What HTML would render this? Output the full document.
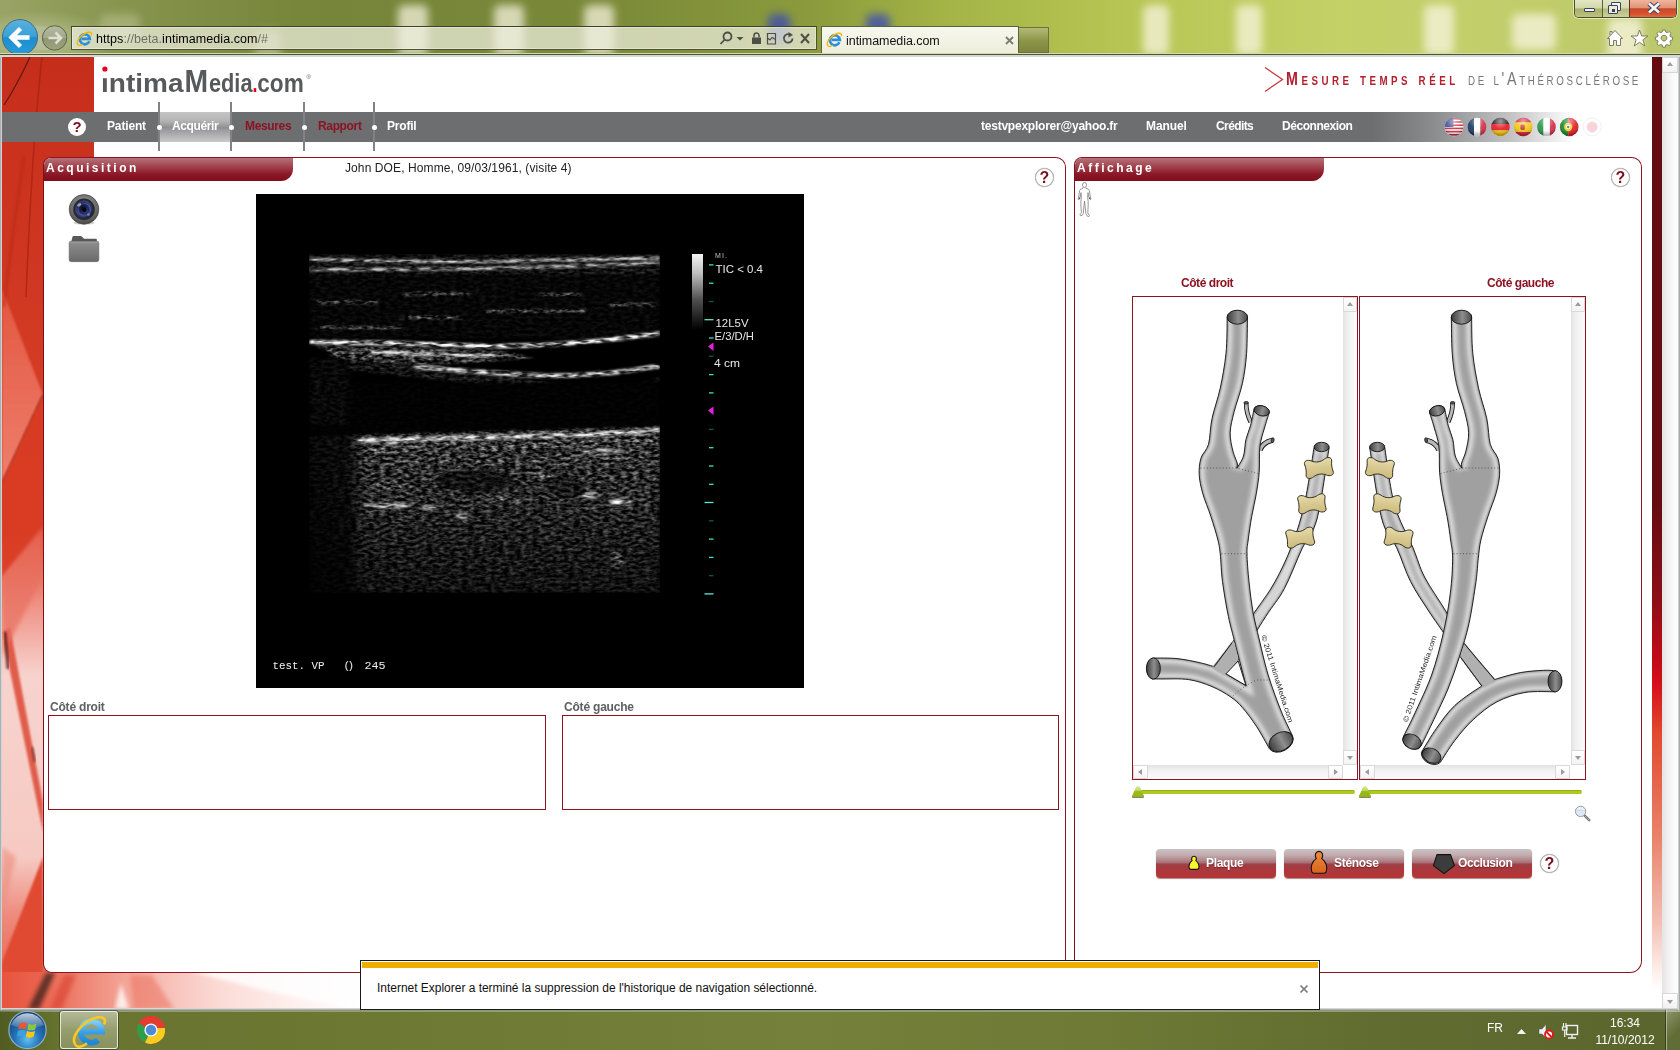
<!DOCTYPE html>
<html lang="fr">
<head>
<meta charset="utf-8">
<title>intimamedia.com</title>
<style>
*{box-sizing:border-box;margin:0;padding:0}
html,body{width:1680px;height:1050px;overflow:hidden;background:#fff}
body{position:relative;font-family:"Liberation Sans",sans-serif;font-size:12px;color:#222}
.abs{position:absolute}
/* ---------- browser chrome ---------- */
#chrome{position:absolute;left:0;top:0;width:1680px;height:57px;overflow:hidden;
 background:linear-gradient(90deg,#7c8a3a 0,#76853a 20%,#7a8838 35%,#8a9a3c 48%,#a3b346 56%,#b5c451 66%,#bccb55 80%,#b3c24d 92%,#a9b848 100%)}
#chrome .edge{z-index:2;position:absolute;left:0;top:53px;width:1680px;height:4px;background:linear-gradient(#d6d8b4 0,#d6d8b4 22%,#4f5629 28%,#4f5629 48%,#cfd6d6 54%,#d6dcdc 100%)}
#chrome .glow{position:absolute;left:-40px;top:10px;width:160px;height:60px;background:radial-gradient(ellipse at center,rgba(255,255,240,.38),rgba(255,255,240,0) 70%)}
#chrome .glass{position:absolute;left:0;top:0;width:1680px;height:57px;background:linear-gradient(90deg,rgba(255,255,255,.22) 0,rgba(255,255,255,.1) 120px,rgba(255,255,255,0) 300px,rgba(255,255,255,0) 1100px,rgba(255,255,240,.14) 1400px,rgba(255,255,240,.22) 1680px)}
.fb{position:absolute;top:5px;height:50px;background:#faf7e4;filter:blur(4px);opacity:.72;border-radius:6px}
.fb.bl{background:#3a48b8;opacity:.75;top:14px;height:30px}
.addr{position:absolute;left:71px;top:26px;width:746px;height:24px;border:1px solid #4d5232;border-top-color:#3e4228;background:rgba(236,238,220,.74);box-shadow:inset 0 0 0 1px rgba(255,255,255,.35)}
.url{position:absolute;left:24px;top:1px;line-height:22px;font-size:12.5px;color:#000;letter-spacing:.06px;white-space:nowrap}
.url em{font-style:normal;color:#6c6f66}
.tab{position:absolute;left:821px;top:26px;width:198px;height:28px;border:1px solid #5a5f3c;border-bottom:none;background:linear-gradient(#f7f8ee,#f1f2e3 60%,#ecedd9)}
.tt{position:absolute;left:24px;top:0;line-height:28px;font-size:12.5px;color:#111;white-space:nowrap;letter-spacing:-.05px}
.newtab{position:absolute;left:1019px;top:27px;width:30px;height:26px;border:1px solid #6a7040;border-left:none;background:linear-gradient(180deg,#b3ba78,#8c9448 55%,#7f873f)}
.wb{position:absolute;left:1574px;top:0;width:103px;height:18px;border:1px solid #4c5230;border-top:none;border-radius:0 0 5px 5px;overflow:hidden;box-shadow:0 0 0 1px rgba(255,255,255,.5)}
.wb>div{position:absolute;top:0;height:17px}
.wmin{left:0;width:28px;background:linear-gradient(#e3e6c4 0,#d2d6a8 48%,#aab068 52%,#bcc27e 100%);border-right:1px solid #5a6038}
.wres{left:28px;width:27px;background:linear-gradient(#e3e6c4 0,#d6d9b4 48%,#b4b97c 52%,#ccd09c 100%);border-right:1px solid #5a3028}
.wcl{left:55px;width:47px;background:linear-gradient(#f0b59c 0,#e09478 45%,#c8482a 52%,#d8502c 80%,#e06a40 100%)}
.wmin i,.wres i{position:absolute;background:#f4f4ec;border:1.5px solid #3a4160;border-radius:1px}
.wres b{position:absolute;left:8.5px;top:8.5px;width:3px;height:3px;background:#3a4160}
/* ---------- page ---------- */
#page{position:absolute;left:2px;top:57px;width:1650px;height:951px;background:#fff;overflow:hidden}
#redcol{position:absolute;left:0;top:0;width:400px;height:952px;overflow:hidden}
#navbar{position:absolute;left:0;top:55px;width:1660px;height:30px;
 background:linear-gradient(90deg,#6d6e70 0,#6d6e70 1370px,#8a8b8d 1430px,#c4c4c5 1510px,#fff 1572px)}
.nav{position:absolute;top:55px;height:30px;line-height:29px;font-weight:bold;font-size:12px;color:#fff;white-space:nowrap}
.nav.red{color:#8c1322}
.tag{font-size:19px;font-variant:small-caps;white-space:nowrap;transform:scaleX(.75);transform-origin:0 0;line-height:20px}
.sep{position:absolute;top:45px;width:2px;height:49px;background:#808285}
.dot{position:absolute;top:67.5px;width:5px;height:5px;margin-left:.5px;border-radius:50%;background:#fff}
.help{position:absolute;width:18px;height:18px;border-radius:50%;background:#fff;color:#7a0f1c;font-weight:bold;font-size:15px;line-height:18px;text-align:center}
.help.o{border:1px solid #b2b2b2;box-shadow:0 0 1px #999;width:19px;height:19px;line-height:18px;font-size:16px}
/* panels */
.panel{position:absolute;border:1px solid #8c1322;border-left:1.4px solid #7d0e1b;border-radius:8px 10px 12px 9px;background:#fff}
.ptitle{position:absolute;left:0;top:0;height:23px;color:#fff;font-weight:bold;font-size:12px;letter-spacing:2.5px;line-height:20px;padding-left:2px;
 background:linear-gradient(#b5737a 0,#a34550 35%,#8c1827 70%,#7f0d1b 100%);border-radius:7px 0 12px 0}
.box{position:absolute;border:1px solid #8c1322;background:#fff}
.lbl{position:absolute;font-weight:bold;font-size:12px;color:#5f6062;white-space:nowrap}
.lblr{position:absolute;font-weight:bold;font-size:12px;color:#8c1322;white-space:nowrap}
.sl{position:absolute;top:732.5px;height:4px;border-radius:2px;background:linear-gradient(#8aa417,#b3cf24 45%,#a6c41e)}
.slh{position:absolute;top:729px;width:12px;height:12px;filter:drop-shadow(0 1px 0 #808080)}
.slh:before{content:"";position:absolute;left:0;top:0;width:12px;height:11px;background:linear-gradient(#dbe9a8 0,#c0d85c 40%,#9cbd1c 48%,#93b512 100%);clip-path:polygon(36% 6%,50% 0,64% 6%,100% 92%,96% 100%,4% 100%,0 92%)}
.btn{position:absolute;top:792px;width:120px;height:29px;border-radius:4px;box-shadow:0 1px 1px rgba(90,40,40,.55);
 background:linear-gradient(#cbc2c4 0,#c2aeb1 20%,#b08388 40%,#a8696f 49%,#9d4249 51%,#a43b40 62%,#b73434 100%)}
.btn span{position:absolute;top:0;line-height:28px;font-weight:bold;font-size:12px;color:#fff;text-shadow:0 1px 1px rgba(60,0,0,.45);white-space:nowrap}
.vsb{position:absolute;right:0;top:0;width:14px;height:468px;background:linear-gradient(90deg,#e3e3e3,#f0f0f0 35%,#fbfbfb)}
.hsb{position:absolute;left:0;bottom:0;height:14px;width:210px;background:linear-gradient(#e3e3e3,#f0f0f0 35%,#fbfbfb)}
.sbb{position:absolute;width:14px;height:15px;background:linear-gradient(#fff,#f3f3f3);border:1px solid #d9d9d9;border-radius:1px}
.hsb .sbb{width:15px;height:14px}
.ar{position:absolute;left:50%;top:50%;width:0;height:0;border:3.5px solid transparent}
.ar.up{border-bottom:4px solid #9b9b9b;margin:-6px 0 0 -3.5px}.ar.dn{border-top:4px solid #9b9b9b;margin:-1.5px 0 0 -3.5px}
.ar.lf{border-right:4px solid #9b9b9b;margin:-3.5px 0 0 -6px}.ar.rt{border-left:4px solid #9b9b9b;margin:-3.5px 0 0 -1.5px}
/* taskbar */
#taskbar{position:absolute;left:0;top:1010px;width:1680px;height:40px;
 background:linear-gradient(90deg,#66722e 0,#6e7a33 25%,#75813a 48%,#6e7a35 65%,#616d30 82%,#59652c 100%)}
#taskbar .top{position:absolute;left:0;top:0;width:100%;height:2px;background:linear-gradient(#8a8f84,#9aa46a)}
#taskbar .dk{position:absolute;left:0;top:1px;width:60px;height:40px;background:linear-gradient(90deg,rgba(40,50,10,.35),rgba(40,50,10,0))}
.tbb{position:absolute;left:60px;top:2px;width:58px;height:38px;border:1px solid rgba(255,255,255,.75);border-radius:3px;background:linear-gradient(rgba(255,255,255,.5),rgba(255,255,255,.3) 50%,rgba(255,255,255,.22));box-shadow:0 0 0 1px rgba(40,45,20,.5)}
.tx{position:absolute;color:#fff;white-space:nowrap;line-height:14px}
.sd{position:absolute;left:1666px;top:1px;width:14px;height:40px;border-left:1px solid rgba(255,255,255,.45);background:linear-gradient(135deg,rgba(255,255,255,.3),rgba(255,255,255,.05) 60%);box-shadow:-1px 0 0 rgba(0,0,0,.35)}
#stripe{position:absolute;left:1652px;top:57px;width:10px;height:952px;background:linear-gradient(#650c10 0,#650c10 47%,#8c0f16 57%,#c00a18 63%,#d6101c 66%,#e2492e 71%,#e9836a 82%,#f3c1b4 91%,#fdf3f0 96.5%,#fff 98%)}
#vscroll{position:absolute;left:1662px;top:57px;width:16px;height:952px;background:linear-gradient(90deg,#e4e4e4,#efefef 30%,#fafafa 70%,#fdfdfd)}
.sbb2{position:absolute;left:0;width:16px;height:16px;background:linear-gradient(#fff,#f1f1f1);border:1px solid #d6d6d6}
#wbb{position:absolute;left:0;top:1008px;width:1680px;height:2px;background:linear-gradient(#e8eaec,#9a9e98)}
#wbl{position:absolute;left:0;top:54px;width:2px;height:956px;background:linear-gradient(90deg,#9aa0a0,#dfe3e6)}
#wbr{position:absolute;left:1678px;top:54px;width:2px;height:956px;background:linear-gradient(90deg,#e3e6e8,#8f9494)}
#notif{position:absolute;left:360px;top:960px;width:960px;height:50px;z-index:3;background:#fff;border:1px solid #1a1a1a;border-top-color:#1a1a1a}
#notif .or{position:absolute;left:1px;top:1px;right:1px;height:6px;background:#f1ac00}
#notif span{position:absolute;left:16px;top:20px;font-size:12px;line-height:14px;color:#111;white-space:nowrap;letter-spacing:-.02px}
/* scrollbar */
</style>
</head>
<body>
<div id="chrome">
 <div class="glass"></div><div class="glow"></div>
 <i class="fb" style="left:398px;width:30px"></i><i class="fb" style="left:494px;width:30px"></i><i class="fb" style="left:584px;width:30px"></i>
 <i class="fb" style="left:255px;width:26px;top:30px;opacity:.35"></i><i class="fb" style="left:100px;width:40px;top:14px;height:30px;opacity:.25"></i>
 <i class="fb bl" style="left:768px;width:22px"></i><i class="fb bl" style="left:866px;width:24px"></i>
 <i class="fb" style="left:1143px;width:26px"></i><i class="fb" style="left:1236px;width:26px"></i><i class="fb" style="left:1424px;width:30px"></i><i class="fb" style="left:1512px;width:44px;top:14px;height:36px"></i><i class="fb" style="left:1608px;width:34px;top:18px;opacity:.75"></i>
 <div class="edge"></div>
 <!-- nav buttons -->
 <svg class="abs" style="left:0;top:17px" width="72" height="37" viewBox="0 17 72 37">
  <defs><linearGradient id="bk" x1="0" y1="0" x2="0" y2="1"><stop offset="0" stop-color="#58b2de"/><stop offset=".5" stop-color="#3a9fd6"/><stop offset=".51" stop-color="#1c8ed0"/><stop offset="1" stop-color="#2a9ad8"/></linearGradient>
  <linearGradient id="fw" x1="0" y1="0" x2="0" y2="1"><stop offset="0" stop-color="#b4b9a0"/><stop offset=".5" stop-color="#a4aa8c"/><stop offset=".51" stop-color="#8f9670"/><stop offset="1" stop-color="#9ea483"/></linearGradient></defs>
  <path d="M30 24 Q44 28 52 26 L52 50 L30 50Z" fill="#b9bfa4" opacity=".6"/>
  <circle cx="54.6" cy="37.9" r="12.2" fill="url(#fw)" stroke="#5d6447" stroke-width="1"/>
  <path d="M48.5 38 H60 M55.5 32.5 L61 38 L55.5 43.5" fill="none" stroke="#dedfd2" stroke-width="2.6"/>
  <circle cx="20" cy="37.2" r="17.6" fill="url(#bk)" stroke="#4a6a78" stroke-width="1"/>
  <path d="M11.5 37.5 H29.5 M20.5 28.5 L11.5 37.5 L20.5 46.5" fill="none" stroke="#fff" stroke-width="4.4" stroke-linejoin="miter"/>
 </svg>
 <!-- address bar -->
 <div class="addr">
  <svg class="abs" style="left:4px;top:3px" width="17" height="17" viewBox="0 0 17 17"><path d="M13.4 11.3 A5 5 0 1 1 13.8 8.8 H5.6" fill="none" stroke="#2b8fdc" stroke-width="2.7"/><path d="M1.8 14.6 C-.5 11 6 3.6 12 2.3 C15 1.8 16.2 3 15.2 5.2" fill="none" stroke="#f5b400" stroke-width="1.4"/><path d="M1.8 14.6 C2.8 16 5 15.4 6.6 14.2" fill="none" stroke="#f5b400" stroke-width="1.3"/></svg>
  <span class="url">https<em>://beta.</em>intimamedia.com<em>/#</em></span>
  <svg class="abs" style="left:645px;top:3px" width="98" height="17" viewBox="0 0 98 17" fill="none" stroke="#4c4f46" stroke-width="1.8">
   <circle cx="10.5" cy="6.5" r="4"/><path d="M7.8 9.5 L3.5 14"/>
   <path d="M19.5 7 H26.5 L23 10.5Z" fill="#4c4f46" stroke="none"/>
   <rect x="35" y="7.5" width="9" height="6.5" fill="#4c4f46" stroke="none"/><path d="M37 7.5 V5.5 a2.5 2.5 0 0 1 5 0 V7.5" stroke-width="1.5"/>
   <path d="M50.5 3.5 H58.5 V14 H50.5Z M50.5 8 L53 10 L55 7.5 L58.5 9.5" stroke-width="1.2"/>
   <path d="M75.5 8.5 a4.3 4.3 0 1 1 -1.8 -3.6" stroke-width="1.8"/><path d="M71.5 2 L76 5 L71.5 7.5Z" fill="#4c4f46" stroke="none"/>
   <path d="M84 4 L92 13 M92 4 L84 13" stroke-width="2"/>
  </svg>
 </div>
 <!-- tab -->
 <div class="tab">
  <svg class="abs" style="left:4px;top:4px" width="17" height="17" viewBox="0 0 17 17"><path d="M13.4 11.3 A5 5 0 1 1 13.8 8.8 H5.6" fill="none" stroke="#2b8fdc" stroke-width="2.7"/><path d="M1.8 14.6 C-.5 11 6 3.6 12 2.3 C15 1.8 16.2 3 15.2 5.2" fill="none" stroke="#f5b400" stroke-width="1.4"/><path d="M1.8 14.6 C2.8 16 5 15.4 6.6 14.2" fill="none" stroke="#f5b400" stroke-width="1.3"/></svg>
  <span class="tt">intimamedia.com</span>
  <svg class="abs" style="left:183px;top:9px" width="9" height="9" viewBox="0 0 9 9"><path d="M1 1 L8 8 M8 1 L1 8" stroke="#7a7c70" stroke-width="1.8"/></svg>
 </div>
 <div class="newtab"></div>
 <!-- window buttons -->
 <div class="wb">
  <div class="wmin"><i style="left:9px;top:8px;width:11px;height:4px"></i></div>
  <div class="wres"><i style="left:8px;top:2px;width:10px;height:9px"></i><i style="left:5px;top:5px;width:10px;height:9px;background:#e9ead8"></i><b></b></div>
  <div class="wcl"><svg class="abs" style="left:17px;top:2px" width="14" height="12" viewBox="0 0 14 12"><path d="M2 1.5 L12 10.5 M12 1.5 L2 10.5" stroke="#3a4160" stroke-width="4.6"/><path d="M2 1.5 L12 10.5 M12 1.5 L2 10.5" stroke="#f4f4f4" stroke-width="2.8"/></svg></div>
 </div>
 <!-- home/star/gear -->
 <svg class="abs" style="left:1604px;top:27px" width="72" height="22" viewBox="0 0 72 22" fill="#fff" stroke="#6e7355" stroke-width=".9" stroke-linejoin="round">
  <path d="M3.5 11.5 L11 3.5 L18.5 11.5 H16.5 V18.5 H12.5 V13.5 H9.5 V18.5 H5.5 V11.5Z M6 8 V4.5 H8 V6.2"/>
  <path d="M35.5 3 L37.6 9 L44 9 L38.9 12.8 L40.8 19 L35.5 15.3 L30.2 19 L32.1 12.8 L27 9 L33.4 9Z"/>
  <path d="M58.7 3 h2.6 l.5 2.1 1.5 .6 1.9 -1.1 1.8 1.8 -1.1 1.9 .6 1.5 2.1 .5 v2.6 l-2.1 .5 -.6 1.5 1.1 1.9 -1.8 1.8 -1.9 -1.1 -1.5 .6 -.5 2.1 h-2.6 l-.5 -2.1 -1.5 -.6 -1.9 1.1 -1.8 -1.8 1.1 -1.9 -.6 -1.5 -2.1 -.5 v-2.6 l2.1 -.5 .6 -1.5 -1.1 -1.9 1.8 -1.8 1.9 1.1 1.5 -.6Z M60 8.2 a2.9 2.9 0 1 0 .01 0Z" fill-rule="evenodd"/>
 </svg>
</div>

<div id="page">
 <div id="redcol">
  <svg width="400" height="952" viewBox="0 0 400 952" style="position:absolute;left:0;top:0">
   <defs>
    <linearGradient id="rc1" x1="0" y1="0" x2="0" y2="1">
     <stop offset="0" stop-color="#c52e1b"/><stop offset=".3" stop-color="#d33a24"/><stop offset=".5" stop-color="#dc452e"/>
     <stop offset=".53" stop-color="#e6634e"/><stop offset=".58" stop-color="#f0968a"/><stop offset=".65" stop-color="#f7d3cd"/>
     <stop offset=".84" stop-color="#f6cac3"/><stop offset=".9" stop-color="#ee8c7e"/><stop offset="1" stop-color="#e55540"/>
    </linearGradient>
    <linearGradient id="rc2" x1="0" y1="0" x2="0" y2="1"><stop offset="0" stop-color="#e25740"/><stop offset="1" stop-color="#ee7f6c"/></linearGradient>
    <linearGradient id="rc3" x1="0" y1="0" x2="1" y2="0"><stop offset="0" stop-color="#e8543e"/><stop offset=".1" stop-color="#ea6450"/><stop offset=".25" stop-color="#f19484"/><stop offset=".4" stop-color="#f6bdb4"/><stop offset=".55" stop-color="#fbdcd7"/><stop offset=".75" stop-color="#fef2f0"/><stop offset=".9" stop-color="#fff"/></linearGradient>
    <filter id="b2"><feGaussianBlur stdDeviation="2"/></filter>
    <filter id="b1"><feGaussianBlur stdDeviation=".8"/></filter>
   </defs>
   <rect x="0" y="0" width="92" height="952" fill="url(#rc1)"/>
   <!-- light triangle mid -->
   <path d="M0 232 L41 338 L0 426 Z" fill="url(#rc2)" filter="url(#b1)"/>
   <path d="M41 338 L0 426" stroke="#5a1208" stroke-width="1.2" opacity=".7" filter="url(#b1)"/>
   <path d="M0 426 L41 338 L41 470 L0 520 Z" fill="#d93a24" opacity=".85" filter="url(#b1)"/>
   <!-- top thin lines -->
   <path d="M28 0 Q14 30 2 48" stroke="#4a120a" stroke-width="1.2" fill="none" opacity=".8"/>
   <path d="M40 0 Q30 90 24 240" stroke="#a8200f" stroke-width="1.5" fill="none" opacity=".7"/>
   <path d="M22 100 Q10 180 2 250" stroke="#b82814" stroke-width="3" fill="none" opacity=".5" filter="url(#b1)"/>
   <!-- pink zone streaks -->
   <path d="M0 575 L8 570 L41 745 L41 775 Z" fill="#dd4a36" opacity=".85" filter="url(#b1)"/>
   <path d="M0 520 L41 470 L41 520 L0 600 Z" fill="#e8705e" opacity=".7" filter="url(#b2)"/>
   <path d="M3 575 L6 612" stroke="#30100a" stroke-width="2.5" opacity=".8" filter="url(#b1)"/>
   <path d="M30 690 L33 705" stroke="#50140c" stroke-width="2" opacity=".7" filter="url(#b1)"/>
   <!-- lower red triangle -->
   <path d="M41 800 L41 915 L0 952 L0 905 Z" fill="#e04a32" filter="url(#b1)"/>
   <path d="M0 860 L14 800 L0 790 Z" fill="#ec8c7e" opacity=".6" filter="url(#b2)"/>
   <!-- bottom fan -->
   <rect x="0" y="915" width="400" height="37" fill="url(#rc3)"/>
   <path d="M44 916 L53 916 L37 952 L26 952 Z" fill="#2a1a18" opacity=".7" filter="url(#b2)"/>
   <path d="M62 918 L74 918 L60 952 L48 952 Z" fill="#d8402c" opacity=".6" filter="url(#b2)"/>
   <path d="M128 918 L150 918 L172 952 L132 952 Z" fill="#e9644f" opacity=".45" filter="url(#b2)"/>
   <path d="M113 952 L119 926 L127 952 Z" fill="#fff" opacity=".8" filter="url(#b2)"/>
   <path d="M185 913 L400 913 L400 952 L360 952 Q280 940 185 913Z" fill="#fff" opacity=".85" filter="url(#b2)"/>
  </svg>
 </div>
 <div id="navbar"></div>


 <!-- header: logo + tagline -->
 <svg class="abs" style="left:96px;top:4px" width="220" height="44" viewBox="0 0 220 44">
  <text y="30.6" font-family="Liberation Sans, sans-serif" font-weight="bold" font-size="25" fill="#58595b"><tspan x="3" textLength="82.5" lengthAdjust="spacingAndGlyphs">intima</tspan><tspan x="86.6" font-size="31.5" textLength="23.6" lengthAdjust="spacingAndGlyphs">M</tspan><tspan x="111" textLength="43.5" lengthAdjust="spacingAndGlyphs">edia</tspan><tspan x="154.6" fill="#e2001a" textLength="5" lengthAdjust="spacingAndGlyphs">.</tspan><tspan x="159.3" textLength="46.4" lengthAdjust="spacingAndGlyphs">com</tspan></text>
  <rect x="3" y="11" width="8" height="6.2" fill="#fff"/><circle cx="6.9" cy="8" r="2.6" fill="#e2001a"/>
  <text x="208.5" y="18" font-family="Liberation Sans, sans-serif" font-size="6" fill="#58595b">®</text>
 </svg>
 <svg class="abs" style="left:1260px;top:8px" width="24" height="28" viewBox="0 0 24 28"><path d="M3 2.5 L20.5 14.5 L3 26.5" fill="none" stroke="#c9363c" stroke-width="1.3"/></svg>
 <div class="abs tag" style="left:1284px;top:12px;color:#b3202c;font-weight:bold;letter-spacing:4.68px">Mesure temps réel</div>
 <div class="abs tag" style="left:1466px;top:12px;color:#77787b;letter-spacing:3.55px">de l'Athérosclérose</div>
 <!-- flags -->
 <svg class="abs" style="left:1440px;top:58px" width="166" height="24" viewBox="0 0 166 24">
  <defs>
   <radialGradient id="gl" cx=".5" cy=".2" r=".7"><stop offset="0" stop-color="#fff" stop-opacity=".55"/><stop offset=".6" stop-color="#fff" stop-opacity=".05"/><stop offset="1" stop-color="#000" stop-opacity=".25"/></radialGradient>
   <clipPath id="c1"><circle cx="12" cy="12" r="9.3"/></clipPath>
  </defs>
  <g clip-path="url(#c1)"><rect x="2" y="2" width="20" height="20" fill="#fff"/><g fill="#d22f45"><rect x="2" y="3" width="20" height="1.6"/><rect x="2" y="6.2" width="20" height="1.6"/><rect x="2" y="9.4" width="20" height="1.6"/><rect x="2" y="12.6" width="20" height="1.6"/><rect x="2" y="15.8" width="20" height="1.6"/><rect x="2" y="19" width="20" height="1.6"/></g><rect x="2" y="2" width="9.5" height="10" fill="#4a5a9c"/><circle cx="12" cy="12" r="9.3" fill="url(#gl)"/></g>
  <g transform="translate(23)" clip-path="url(#c1)"><rect x="2" y="2" width="7" height="20" fill="#1f3c68"/><rect x="9" y="2" width="6.4" height="20" fill="#fff"/><rect x="15.4" y="2" width="7" height="20" fill="#d5324b"/><circle cx="12" cy="12" r="9.3" fill="url(#gl)"/></g>
  <g transform="translate(46.4)" clip-path="url(#c1)"><rect x="2" y="2" width="20" height="7" fill="#2a2a2a"/><rect x="2" y="9" width="20" height="6.4" fill="#e8202a"/><rect x="2" y="15.4" width="20" height="7" fill="#f4c515"/><circle cx="12" cy="12" r="9.3" fill="url(#gl)"/></g>
  <g transform="translate(69.2)" clip-path="url(#c1)"><rect x="2" y="2" width="20" height="5.5" fill="#d42a3c"/><rect x="2" y="7.5" width="20" height="9.5" fill="#f6c81e"/><rect x="2" y="17" width="20" height="5.5" fill="#d42a3c"/><rect x="9.2" y="9.5" width="4.4" height="5.4" rx="1.5" fill="#c2412d"/><circle cx="12" cy="12" r="9.3" fill="url(#gl)"/></g>
  <g transform="translate(92.5)" clip-path="url(#c1)"><rect x="2" y="2" width="7" height="20" fill="#2e9a4e"/><rect x="9" y="2" width="6.4" height="20" fill="#fff"/><rect x="15.4" y="2" width="7" height="20" fill="#d5324b"/><circle cx="12" cy="12" r="9.3" fill="url(#gl)"/></g>
  <g transform="translate(115.2)" clip-path="url(#c1)"><rect x="2" y="2" width="9" height="20" fill="#1f8a3c"/><rect x="11" y="2" width="12" height="20" fill="#e0222e"/><circle cx="11" cy="12" r="4.2" fill="#f2d21c"/><circle cx="11" cy="12" r="2.2" fill="#fff"/><circle cx="11" cy="12" r="1.2" fill="#3a5fb0"/><circle cx="12" cy="12" r="9.3" fill="url(#gl)"/></g>
  <g transform="translate(138.2)"><circle cx="12" cy="12" r="9" fill="#fff" stroke="#f1f1f1" stroke-width="1"/><circle cx="12" cy="12" r="5.4" fill="#f8d3d9"/></g>
 </svg>
 <!-- nav items -->
 <div class="abs" style="left:157px;top:55px;width:72px;height:30px;background:linear-gradient(#c4c4c5 0,#b4b4b5 30%,#8f8f91 52%,#9c9c9e 60%,#c9c9ca 100%)"></div>
 <div class="sep" style="left:156px"></div><div class="sep" style="left:228px"></div><div class="sep" style="left:301px"></div><div class="sep" style="left:371px"></div>
 <div class="dot" style="left:154px"></div><div class="dot" style="left:226px"></div><div class="dot" style="left:299px"></div><div class="dot" style="left:369px"></div>
 <div class="help" style="left:66px;top:61px">?</div>
 <div class="nav" style="left:105px;letter-spacing:-.15px">Patient</div>
 <div class="nav" style="left:170px;letter-spacing:-.4px">Acquérir</div>
 <div class="nav red" style="left:243px;letter-spacing:-.35px">Mesures</div>
 <div class="nav red" style="left:316px;letter-spacing:-.35px">Rapport</div>
 <div class="nav" style="left:385px;letter-spacing:-.2px">Profil</div>
 <div class="nav" style="left:979px;letter-spacing:-.23px">testvpexplorer@yahoo.fr</div>
 <div class="nav" style="left:1144px;letter-spacing:-.1px">Manuel</div>
 <div class="nav" style="left:1214px;letter-spacing:-.6px">Crédits</div>
 <div class="nav" style="left:1280px;letter-spacing:-.45px">Déconnexion</div>
 <!-- panels -->
 <div class="panel" id="pAcq" style="left:41px;top:100px;width:1023px;height:816px">
  <div class="ptitle" style="width:249px">Acquisition</div>
 </div>
 <div class="panel" id="pAff" style="left:1072px;top:100px;width:568px;height:816px">
  <div class="ptitle" style="width:249px">Affichage</div>
 </div>
 <!-- camera & folder icons -->
 <svg class="abs" style="left:66px;top:136px" width="32" height="34" viewBox="0 0 32 34">
  <defs><radialGradient id="cam1" cx=".5" cy=".35" r=".7"><stop offset="0" stop-color="#9a9a9a"/><stop offset=".7" stop-color="#666"/><stop offset="1" stop-color="#3c3c3c"/></radialGradient>
  <radialGradient id="cam2" cx=".42" cy=".4" r=".65"><stop offset="0" stop-color="#0c0c16"/><stop offset=".3" stop-color="#1a2046"/><stop offset=".62" stop-color="#3b4588"/><stop offset=".85" stop-color="#283066"/><stop offset="1" stop-color="#12152c"/></radialGradient></defs>
  <ellipse cx="16" cy="30" rx="11" ry="1.6" fill="#000" opacity=".18"/>
  <circle cx="16" cy="16.4" r="14.8" fill="url(#cam1)" stroke="#4a4a4a" stroke-width=".8"/>
  <circle cx="16" cy="16.4" r="10.8" fill="#2a2a2a"/>
  <circle cx="16" cy="16.4" r="8.8" fill="url(#cam2)"/>
  <circle cx="16.4" cy="16.8" r="6.2" fill="none" stroke="#6a76c4" stroke-width=".9" opacity=".45"/><circle cx="16.4" cy="16.8" r="4.2" fill="none" stroke="#1a2050" stroke-width="1" opacity=".8"/>
  <circle cx="16.4" cy="16.8" r="2.1" fill="#05050a"/>
  <ellipse cx="11.2" cy="11.8" rx="2.2" ry="1.4" fill="#fff" opacity=".55" transform="rotate(-35 11.2 11.8)"/><circle cx="20.5" cy="21.5" r="1.3" fill="#aab4ff" opacity=".6"/>
 </svg>
 <svg class="abs" style="left:66px;top:178px" width="32" height="28" viewBox="0 0 32 28">
  <defs><linearGradient id="fo1" x1="0" y1="0" x2="0" y2="1"><stop offset="0" stop-color="#8f8f8f"/><stop offset="1" stop-color="#6b6b6b"/></linearGradient></defs>
  <path d="M3.2 7 L4.6 1.6 Q4.8 1 5.6 1 H12.6 Q13.3 1 13.8 1.5 L16 3.8 H28 Q28.8 3.8 28.8 4.6 V8Z" fill="#585858"/>
  <rect x="1.2" y="6.2" width="29.6" height="20.2" rx="1.8" fill="url(#fo1)" stroke="#5a5a5a" stroke-width=".6"/>
  <rect x="1.6" y="6.6" width="28.8" height="1" fill="#a8a8a8" opacity=".8"/>
  <rect x="1" y="26.4" width="30" height="1" fill="#000" opacity=".15"/>
 </svg>
 <!-- human -->
 <svg class="abs" style="left:1075px;top:125px" width="16" height="38" viewBox="0 0 16 38">
  <g fill="#fff" stroke="#7d7d7d" stroke-width=".8" stroke-linejoin="round">
  <path d="M6.2 5.4 L5.8 6.4 Q3.2 6.8 2.6 8.6 L1.6 15.2 Q.8 16.6 1.6 17.8 Q2.6 17.6 2.9 16 L4 10.6 L4.4 15.4 Q3.6 19 3.9 23 L4.4 30.8 L2.8 33 Q3.4 34.2 5.2 33.4 L6.2 31.8 L7.5 19 L8.9 31.8 L10.6 34.4 Q12.2 35 12.4 33.8 L10.8 31 L11.2 23 Q11.4 19 10.6 15.4 L11 10.6 L12.2 16 Q12.6 17.6 13.6 17.8 Q14.2 16.6 13.4 15.2 L12.4 8.6 Q11.8 6.8 9.2 6.4 L8.8 5.4"/>
  <ellipse cx="7.5" cy="3" rx="2" ry="2.5"/></g>
  <path d="M2.2 16.8 L2.6 15.6 M13 16.8 L12.6 15.6" stroke="#444" stroke-width="1.4"/>
 </svg>
 <!-- magnifier -->
 <svg class="abs" style="left:1570px;top:746px" width="20" height="20" viewBox="0 0 20 20">
  <path d="M12.6 12.6 L17.2 17.2" stroke="#7a7a82" stroke-width="2.6" stroke-linecap="round"/><path d="M13.4 13.4 L17 17" stroke="#d8d8ee" stroke-width=".9" stroke-dasharray=".9 .9"/>
  <circle cx="8.6" cy="8.4" r="5.2" fill="#dde9f6" stroke="#9c9c9c" stroke-width="1"/><path d="M4.2 7.4 H13" stroke="#c3d7ec" stroke-width=".8"/><path d="M4.6 6.6 A4.6 4.6 0 0 1 12.6 6.6Z" fill="#ecf3fb"/>
 </svg>
 <!-- Acquisition content -->
 <div class="abs" style="left:343px;top:104px;font-size:12px;line-height:14px;letter-spacing:.1px;color:#222;white-space:nowrap">John DOE, Homme, 09/03/1961, (visite 4)</div>
 <div class="help o" style="left:1033px;top:111px">?</div>
 <div class="abs" id="us" style="left:254px;top:137px;width:548px;height:494px;background:#000;overflow:hidden"><!--US--><svg width="548" height="494" viewBox="0 0 548 494" style="position:absolute;left:0;top:0">
 <defs>
  <filter id="spk" x="0" y="0" width="350" height="338" filterUnits="userSpaceOnUse" color-interpolation-filters="sRGB">
   <feGaussianBlur in="SourceGraphic" stdDeviation="2 1.2" result="m"/>
   <feTurbulence type="fractalNoise" baseFrequency="0.17 0.34" numOctaves="2" seed="11" result="n"/>
   <feColorMatrix in="n" type="matrix" values="2.1 0 0 0 -0.68  2.1 0 0 0 -0.68  2.1 0 0 0 -0.68  0 0 0 0 1" result="n1"/>
   <feComponentTransfer in="n1" result="n2"><feFuncR type="gamma" exponent="1.15"/><feFuncG type="gamma" exponent="1.15"/><feFuncB type="gamma" exponent="1.15"/></feComponentTransfer>
   <feComposite in="m" in2="n2" operator="arithmetic" k1="1.2" k2="0.035" k3="0" k4="0" result="sp"/><feGaussianBlur in="sp" stdDeviation=".7 .55"/>
  </filter>
  <filter id="bnd" x="0" y="0" width="350" height="338" filterUnits="userSpaceOnUse" color-interpolation-filters="sRGB">
   <feGaussianBlur in="SourceGraphic" stdDeviation="1.6 1.1" result="m"/>
   <feTurbulence type="fractalNoise" baseFrequency="0.09 0.3" numOctaves="2" seed="4" result="n"/>
   <feColorMatrix in="n" type="matrix" values="2.8 0 0 0 -0.85  2.8 0 0 0 -0.85  2.8 0 0 0 -0.85  0 0 0 0 1" result="n2"/>
   <feComposite in="m" in2="n2" operator="arithmetic" k1="0.9" k2="0.12" k3="0" k4="0" result="c"/>
   <feFlood flood-color="#000" result="bk"/>
   <feMerge><feMergeNode in="bk"/><feMergeNode in="c"/></feMerge>
  </filter>
  <linearGradient id="gbar" x1="0" y1="0" x2="0" y2="1"><stop offset="0" stop-color="#f4f4f4"/><stop offset=".25" stop-color="#c0c0c0"/><stop offset=".6" stop-color="#505050"/><stop offset="1" stop-color="#000"/></linearGradient>
  <linearGradient id="tis" x1="0" y1="0" x2="0" y2="1"><stop offset="0" stop-color="#787878"/><stop offset=".4" stop-color="#5e5e5e"/><stop offset=".7" stop-color="#3e3e3e"/><stop offset="1" stop-color="#262626"/></linearGradient>
  <linearGradient id="tisl" x1="0" y1="0" x2="1" y2="0"><stop offset="0" stop-color="#000" stop-opacity=".85"/><stop offset=".7" stop-color="#000" stop-opacity=".75"/><stop offset="1" stop-color="#000" stop-opacity="0"/></linearGradient>
 </defs>
 <g transform="translate(53.5,60.5)">
  <g filter="url(#spk)">
   <rect x="0" y="0" width="350" height="338" fill="#000"/>
   <!-- upper tissue -->
   <rect x="0" y="0" width="350" height="84" fill="#0f0f0f"/><rect x="0" y="0" width="350" height="20" fill="#2a2a2a"/>
   <g stroke="#808080" stroke-width="2.8" fill="none">
    <path d="M92 39.5 H160"/><path d="M8 47.5 H68"/><path d="M176 56.5 H278"/><path d="M92 63 H152"/><path d="M8 73 H92"/><path d="M230 40 H270"/><path d="M300 50 H345"/>
   </g>
   <!-- between band 1 and 2 -->
   <path d="M8 91 Q100 93 190 96 L225 103 Q150 111 90 109 T26 103 Z" fill="#707070"/>
   <path d="M30 104 Q120 110 227 126 T350 120 L350 126 Q280 134 220 132 T30 114 Z" fill="#303030"/>
   <!-- lumen -->
   <rect x="0" y="104" width="40" height="80" fill="#121212"/>
   <path d="M40 128 H350 V172 L40 182 Z" fill="#050505"/>
   <!-- tissue below -->
   <path d="M0 182 L350 172 L350 338 L0 338 Z" fill="url(#tis)"/>
   <rect x="0" y="170" width="56" height="168" fill="url(#tisl)"/>
   <path d="M60 196 Q200 192 350 186" stroke="#909090" stroke-width="5" fill="none"/>
   <path d="M60 207 H200 M220 204 H340" stroke="#808080" stroke-width="4" fill="none"/>
   <ellipse cx="165" cy="226" rx="40" ry="11" fill="#000" opacity=".55"/>
   <ellipse cx="255" cy="232" rx="20" ry="10" fill="#000" opacity=".4"/>
   <path d="M58 232 H100 M180 245 H210 M225 222 H240" stroke="#a0a0a0" stroke-width="4" fill="none"/>
   <ellipse cx="308" cy="305" rx="7" ry="9" fill="#fff" opacity=".35"/>
  </g>
  <g filter="url(#bnd)" fill="none" style="mix-blend-mode:screen">
   <path d="M0 4.7 Q120 8.5 230 6 T350 3.4" stroke="#e8e8e8" stroke-width="3"/>
   <path d="M0 14.9 Q150 15.5 250 12 T350 8" stroke="#d8d8d8" stroke-width="3"/>
   <path d="M0 87.6 Q80 88 160 91 T350 79" stroke="#fff" stroke-width="4.6"/>
   <path d="M62 97.5 Q120 99 185 101.5" stroke="#e4e4e4" stroke-width="4"/>
   <path d="M105 112 Q170 118 227 120.7 T350 111.6" stroke="#f0f0f0" stroke-width="4.6"/>
   <path d="M48 186 Q140 184 227 181.6 T350 175" stroke="#f4f4f4" stroke-width="4.6"/>
   <ellipse cx="78" cy="187.5" rx="13" ry="2.6" fill="#fff"/>
   <ellipse cx="294" cy="197" rx="22" ry="2.4" fill="#ddd"/>
   <ellipse cx="78" cy="251" rx="24" ry="2.4" fill="#eee"/><ellipse cx="120" cy="253" rx="7" ry="2.4" fill="#eee"/>
   <ellipse cx="153" cy="261" rx="6" ry="3" fill="#fff"/>
   <ellipse cx="281" cy="241" rx="8" ry="3" fill="#fff"/>
   <ellipse cx="311" cy="247" rx="12" ry="3.4" fill="#fff"/>
  </g>
 </g>
 <!-- grey bar + annotations -->
 <rect x="436" y="60" width="11" height="76" fill="url(#gbar)"/>

 <g><path d="M453 70.9 H457.5" stroke="#3fe0c8" stroke-width="1.3"/><path d="M453 89.2 H457.5" stroke="#3fe0c8" stroke-width="1.3"/><path d="M453 107.5 H457.5" stroke="#0d5a50" stroke-width="1.3"/><path d="M448.5 125.7 H457.5" stroke="#5fe8d0" stroke-width="1.3"/><path d="M453 144.0 H457.5" stroke="#3fe0c8" stroke-width="1.3"/><path d="M453 162.3 H457.5" stroke="#0d5a50" stroke-width="1.3"/><path d="M453 180.6 H457.5" stroke="#3fe0c8" stroke-width="1.3"/><path d="M453 198.9 H457.5" stroke="#3fe0c8" stroke-width="1.3"/><path d="M453 235.4 H457.5" stroke="#0d5a50" stroke-width="1.3"/><path d="M453 253.7 H457.5" stroke="#3fe0c8" stroke-width="1.3"/><path d="M453 272.0 H457.5" stroke="#3fe0c8" stroke-width="1.3"/><path d="M453 290.3 H457.5" stroke="#3fe0c8" stroke-width="1.3"/><path d="M448.5 308.5 H457.5" stroke="#5fe8d0" stroke-width="1.3"/><path d="M453 326.8 H457.5" stroke="#0d5a50" stroke-width="1.3"/><path d="M453 345.1 H457.5" stroke="#3fe0c8" stroke-width="1.3"/><path d="M453 363.4 H457.5" stroke="#3fe0c8" stroke-width="1.3"/><path d="M453 381.7 H457.5" stroke="#0d5a50" stroke-width="1.3"/><path d="M448.5 399.9 H457.5" stroke="#5fe8d0" stroke-width="1.3"/>
  <path d="M457.5 148.6 L452 152.6 L457.5 157 Z" fill="#e81ee0"/><path d="M457.5 212.4 L452 216.6 L457.5 221 Z" fill="#e81ee0"/>
 </g>
 <g font-family="Liberation Sans, sans-serif" font-size="11.5" fill="#e6e6e6" stroke="#000" stroke-width=".35" paint-order="stroke">
  <text x="459" y="64" font-size="7" textLength="12" opacity=".8">M I .</text>
  <text x="459.5" y="78.8" textLength="47.5" lengthAdjust="spacingAndGlyphs">TIC &lt; 0.4</text>
  <text x="459.5" y="133" textLength="33" lengthAdjust="spacingAndGlyphs">12L5V</text>
  <text x="458.5" y="146" textLength="39.5" lengthAdjust="spacingAndGlyphs">E/3/D/H</text>
  <text x="458" y="173" textLength="26" lengthAdjust="spacingAndGlyphs">4 cm</text>
 </g>
 <text y="474.5" font-family="Liberation Mono, monospace" font-size="11" fill="#f0f0f0" xml:space="preserve"><tspan x="16.5" textLength="52" lengthAdjust="spacingAndGlyphs">test. VP</tspan><tspan x="80" textLength="18">  ()</tspan><tspan x="101.5" textLength="28" lengthAdjust="spacingAndGlyphs"> 245</tspan></text>
</svg>
<!--/US--></div>
 <div class="lbl" style="left:48px;top:643px;letter-spacing:-.2px">Côté droit</div>
 <div class="lbl" style="left:562px;top:643px;letter-spacing:-.2px">Côté gauche</div>
 <div class="box" style="left:46px;top:658px;width:498px;height:95px"></div>
 <div class="box" style="left:560px;top:658px;width:497px;height:95px"></div>
 <!-- Affichage content -->
 <div class="help o" style="left:1609px;top:111px">?</div>
 <div class="lblr" style="left:1179px;top:219px;letter-spacing:-.45px">Côté droit</div>
 <div class="lblr" style="left:1485px;top:219px;letter-spacing:-.45px">Côté gauche</div>
 <div class="box" id="art1" style="left:1130px;top:239px;width:226px;height:484px;overflow:hidden"><!--A1--><svg width="224" height="482" viewBox="0 0 224 482" style="position:absolute;left:0;top:0"><g transform="translate(-.6 -1)"><defs>
<filter id="ab2" x="-20%" y="-20%" width="140%" height="140%"><feGaussianBlur stdDeviation="2.2"/></filter>
<filter id="ab1" x="-20%" y="-20%" width="140%" height="140%"><feGaussianBlur stdDeviation="1"/></filter>
<linearGradient id="aop" x1="0" y1="0" x2="1" y2="0"><stop offset="0" stop-color="#3c3c3c"/><stop offset=".55" stop-color="#8e8e8e"/><stop offset="1" stop-color="#4a4a4a"/></linearGradient>
<linearGradient id="abone" x1="0" y1="0" x2="0" y2="1"><stop offset="0" stop-color="#e6dbae"/><stop offset=".5" stop-color="#d8c990"/><stop offset="1" stop-color="#cdbb80"/></linearGradient>
</defs><g id="vtop1"><clipPath id="cpv1"><path d="M181.6 151.8C180.0 161.3 175.6 192.5 171.8 209.0C168.0 225.5 163.9 237.8 159.0 250.6C154.1 263.4 148.4 275.2 142.6 285.7C136.8 296.2 131.2 303.4 124.0 313.6C116.8 323.8 106.8 337.1 99.5 346.8C92.2 356.5 83.2 367.8 80.0 372.0L92.0 380.0C94.2 377.5 98.4 374.9 105.3 365.0C112.2 355.1 125.5 332.7 133.3 320.6C141.1 308.5 146.0 303.9 152.0 292.6C158.0 281.3 164.1 264.6 169.5 253.0C174.9 241.4 180.1 239.9 184.6 223.0C189.1 206.1 194.7 163.7 196.7 151.8Z"/></clipPath>
<g clip-path="url(#cpv1)"><path d="M181.6 151.8C180.0 161.3 175.6 192.5 171.8 209.0C168.0 225.5 163.9 237.8 159.0 250.6C154.1 263.4 148.4 275.2 142.6 285.7C136.8 296.2 131.2 303.4 124.0 313.6C116.8 323.8 106.8 337.1 99.5 346.8C92.2 356.5 83.2 367.8 80.0 372.0L92.0 380.0C94.2 377.5 98.4 374.9 105.3 365.0C112.2 355.1 125.5 332.7 133.3 320.6C141.1 308.5 146.0 303.9 152.0 292.6C158.0 281.3 164.1 264.6 169.5 253.0C174.9 241.4 180.1 239.9 184.6 223.0C189.1 206.1 194.7 163.7 196.7 151.8Z" fill="#a0a0a0"/><path d="M181.6 151.8C180.0 161.3 175.6 192.5 171.8 209.0C168.0 225.5 163.9 237.8 159.0 250.6C154.1 263.4 148.4 275.2 142.6 285.7C136.8 296.2 131.2 303.4 124.0 313.6C116.8 323.8 106.8 337.1 99.5 346.8C92.2 356.5 83.2 367.8 80.0 372.0L92.0 380.0C94.2 377.5 98.4 374.9 105.3 365.0C112.2 355.1 125.5 332.7 133.3 320.6C141.1 308.5 146.0 303.9 152.0 292.6C158.0 281.3 164.1 264.6 169.5 253.0C174.9 241.4 180.1 239.9 184.6 223.0C189.1 206.1 194.7 163.7 196.7 151.8Z" fill="none" stroke="#dcdcdc" stroke-width="11" filter="url(#ab2)"/><path d="M181.6 151.8C180.0 161.3 175.6 192.5 171.8 209.0C168.0 225.5 163.9 237.8 159.0 250.6C154.1 263.4 148.4 275.2 142.6 285.7C136.8 296.2 131.2 303.4 124.0 313.6C116.8 323.8 106.8 337.1 99.5 346.8C92.2 356.5 83.2 367.8 80.0 372.0L92.0 380.0C94.2 377.5 98.4 374.9 105.3 365.0C112.2 355.1 125.5 332.7 133.3 320.6C141.1 308.5 146.0 303.9 152.0 292.6C158.0 281.3 164.1 264.6 169.5 253.0C174.9 241.4 180.1 239.9 184.6 223.0C189.1 206.1 194.7 163.7 196.7 151.8Z" fill="none" stroke="#707070" stroke-width="2" filter="url(#ab1)"/></g>
<path d="M181.6 151.8C180.0 161.3 175.6 192.5 171.8 209.0C168.0 225.5 163.9 237.8 159.0 250.6C154.1 263.4 148.4 275.2 142.6 285.7C136.8 296.2 131.2 303.4 124.0 313.6C116.8 323.8 106.8 337.1 99.5 346.8C92.2 356.5 83.2 367.8 80.0 372.0L92.0 380.0C94.2 377.5 98.4 374.9 105.3 365.0C112.2 355.1 125.5 332.7 133.3 320.6C141.1 308.5 146.0 303.9 152.0 292.6C158.0 281.3 164.1 264.6 169.5 253.0C174.9 241.4 180.1 239.9 184.6 223.0C189.1 206.1 194.7 163.7 196.7 151.8Z" fill="none" stroke="#111" stroke-width=".9" stroke-linejoin="round"/><ellipse cx="189.2" cy="151" rx="7.6" ry="4.7" transform="rotate(0 189.2 151)" fill="url(#aop)" stroke="#111" stroke-width=".9"/></g><path d="M118.2 126 C115.5 120 113.6 114 113.8 107" fill="none" stroke="#111" stroke-width="4.6" stroke-linecap="butt"/><path d="M118.2 126 C115.5 120 113.6 114 113.8 107" fill="none" stroke="#b8b8b8" stroke-width="2.8999999999999995"/><path d="M127.6 154 C130 148 134 145.5 140 144.2" fill="none" stroke="#111" stroke-width="5.2" stroke-linecap="butt"/><path d="M127.6 154 C130 148 134 145.5 140 144.2" fill="none" stroke="#b8b8b8" stroke-width="3.5"/><ellipse cx="113.8" cy="106.8" rx="2.3" ry="1.3" fill="#555" stroke="#111" stroke-width=".7"/><ellipse cx="140.3" cy="144.2" rx="1.4" ry="2.5" fill="#555" stroke="#111" stroke-width=".7" transform="rotate(10 140.3 144.2)"/><clipPath id="cpt1"><path d="M94.8 21.2C94.6 27.2 94.8 45.5 93.6 57.3C92.4 69.1 90.1 81.4 87.8 92.3C85.5 103.2 81.5 113.3 79.6 122.6C77.6 131.9 77.9 141.7 76.1 148.3C74.2 154.9 70.0 157.2 68.5 162.3C67.0 167.4 66.5 172.8 66.8 178.6C67.1 184.4 68.3 190.3 70.3 197.3C72.2 204.3 76.0 212.8 78.5 220.6C81.0 228.4 84.0 237.8 85.5 244.0C87.0 250.2 87.0 250.8 87.8 257.7C88.6 264.6 88.7 275.2 90.1 285.7C91.5 296.2 93.8 310.1 96.0 320.6C98.2 331.1 100.1 337.1 103.0 348.6C105.9 360.1 111.8 382.7 113.5 389.5C110.2 387.6 96.9 379.8 93.6 377.8C91.7 376.6 83.9 372.0 82.0 370.8C79.7 370.1 74.2 368.2 68.0 366.8C61.8 365.4 52.4 363.4 44.6 362.6C36.8 361.8 25.2 362.1 21.3 362.0A7 10.6 0 0 0 20.0 383.0C21.4 383.0 22.2 382.9 28.3 383.0C34.4 383.1 47.8 382.3 56.3 383.6C64.8 384.9 72.6 387.7 79.6 390.6C86.6 393.5 93.2 397.5 98.3 401.0C103.4 404.5 105.7 406.7 110.0 411.6C114.3 416.5 119.5 423.5 124.0 430.3C128.5 437.1 134.7 448.7 136.8 452.4A12.8 8.9 -28 0 0 160.0 439.6C158.1 435.3 152.3 424.1 148.3 414.0C144.3 403.9 139.4 390.7 135.8 379.0C132.2 367.3 129.5 354.5 127.0 344.0C124.5 333.5 122.3 325.7 120.6 316.0C118.9 306.3 117.6 295.4 116.6 285.7C115.6 276.0 114.7 264.6 114.6 257.7C114.5 250.8 115.0 250.2 115.8 244.0C116.6 237.8 117.9 228.4 119.3 220.6C120.7 212.8 122.8 204.7 124.0 197.3C125.2 189.9 126.2 184.1 126.8 176.3C127.4 168.5 126.6 158.0 127.5 150.6C128.4 143.2 130.5 137.6 132.1 132.0C133.7 126.4 136.0 119.3 136.8 116.8A7.8 5 15 0 0 121.6 113.3C121.0 116.0 119.4 124.5 118.1 129.6C116.8 134.7 114.7 138.5 113.5 143.6C112.3 148.7 112.6 155.2 111.1 160.0C109.6 164.8 105.6 170.2 104.5 172.2C104.5 171.3 105.5 169.8 104.8 167.0C104.1 164.2 101.8 160.4 100.6 155.3C99.4 150.2 97.6 143.2 97.8 136.6C98.0 130.0 99.8 123.8 101.8 115.6C103.8 107.4 107.9 97.3 110.0 87.6C112.1 77.9 113.4 68.4 114.2 57.3C115.0 46.2 114.9 27.2 115.1 21.2A10.2 7 0 0 0 94.8 21.2Z"/></clipPath>
<g clip-path="url(#cpt1)"><path d="M94.8 21.2C94.6 27.2 94.8 45.5 93.6 57.3C92.4 69.1 90.1 81.4 87.8 92.3C85.5 103.2 81.5 113.3 79.6 122.6C77.6 131.9 77.9 141.7 76.1 148.3C74.2 154.9 70.0 157.2 68.5 162.3C67.0 167.4 66.5 172.8 66.8 178.6C67.1 184.4 68.3 190.3 70.3 197.3C72.2 204.3 76.0 212.8 78.5 220.6C81.0 228.4 84.0 237.8 85.5 244.0C87.0 250.2 87.0 250.8 87.8 257.7C88.6 264.6 88.7 275.2 90.1 285.7C91.5 296.2 93.8 310.1 96.0 320.6C98.2 331.1 100.1 337.1 103.0 348.6C105.9 360.1 111.8 382.7 113.5 389.5C110.2 387.6 96.9 379.8 93.6 377.8C91.7 376.6 83.9 372.0 82.0 370.8C79.7 370.1 74.2 368.2 68.0 366.8C61.8 365.4 52.4 363.4 44.6 362.6C36.8 361.8 25.2 362.1 21.3 362.0A7 10.6 0 0 0 20.0 383.0C21.4 383.0 22.2 382.9 28.3 383.0C34.4 383.1 47.8 382.3 56.3 383.6C64.8 384.9 72.6 387.7 79.6 390.6C86.6 393.5 93.2 397.5 98.3 401.0C103.4 404.5 105.7 406.7 110.0 411.6C114.3 416.5 119.5 423.5 124.0 430.3C128.5 437.1 134.7 448.7 136.8 452.4A12.8 8.9 -28 0 0 160.0 439.6C158.1 435.3 152.3 424.1 148.3 414.0C144.3 403.9 139.4 390.7 135.8 379.0C132.2 367.3 129.5 354.5 127.0 344.0C124.5 333.5 122.3 325.7 120.6 316.0C118.9 306.3 117.6 295.4 116.6 285.7C115.6 276.0 114.7 264.6 114.6 257.7C114.5 250.8 115.0 250.2 115.8 244.0C116.6 237.8 117.9 228.4 119.3 220.6C120.7 212.8 122.8 204.7 124.0 197.3C125.2 189.9 126.2 184.1 126.8 176.3C127.4 168.5 126.6 158.0 127.5 150.6C128.4 143.2 130.5 137.6 132.1 132.0C133.7 126.4 136.0 119.3 136.8 116.8A7.8 5 15 0 0 121.6 113.3C121.0 116.0 119.4 124.5 118.1 129.6C116.8 134.7 114.7 138.5 113.5 143.6C112.3 148.7 112.6 155.2 111.1 160.0C109.6 164.8 105.6 170.2 104.5 172.2C104.5 171.3 105.5 169.8 104.8 167.0C104.1 164.2 101.8 160.4 100.6 155.3C99.4 150.2 97.6 143.2 97.8 136.6C98.0 130.0 99.8 123.8 101.8 115.6C103.8 107.4 107.9 97.3 110.0 87.6C112.1 77.9 113.4 68.4 114.2 57.3C115.0 46.2 114.9 27.2 115.1 21.2A10.2 7 0 0 0 94.8 21.2Z" fill="#a0a0a0"/><path d="M94.8 21.2C94.6 27.2 94.8 45.5 93.6 57.3C92.4 69.1 90.1 81.4 87.8 92.3C85.5 103.2 81.5 113.3 79.6 122.6C77.6 131.9 77.9 141.7 76.1 148.3C74.2 154.9 70.0 157.2 68.5 162.3C67.0 167.4 66.5 172.8 66.8 178.6C67.1 184.4 68.3 190.3 70.3 197.3C72.2 204.3 76.0 212.8 78.5 220.6C81.0 228.4 84.0 237.8 85.5 244.0C87.0 250.2 87.0 250.8 87.8 257.7C88.6 264.6 88.7 275.2 90.1 285.7C91.5 296.2 93.8 310.1 96.0 320.6C98.2 331.1 100.1 337.1 103.0 348.6C105.9 360.1 111.8 382.7 113.5 389.5C110.2 387.6 96.9 379.8 93.6 377.8C91.7 376.6 83.9 372.0 82.0 370.8C79.7 370.1 74.2 368.2 68.0 366.8C61.8 365.4 52.4 363.4 44.6 362.6C36.8 361.8 25.2 362.1 21.3 362.0A7 10.6 0 0 0 20.0 383.0C21.4 383.0 22.2 382.9 28.3 383.0C34.4 383.1 47.8 382.3 56.3 383.6C64.8 384.9 72.6 387.7 79.6 390.6C86.6 393.5 93.2 397.5 98.3 401.0C103.4 404.5 105.7 406.7 110.0 411.6C114.3 416.5 119.5 423.5 124.0 430.3C128.5 437.1 134.7 448.7 136.8 452.4A12.8 8.9 -28 0 0 160.0 439.6C158.1 435.3 152.3 424.1 148.3 414.0C144.3 403.9 139.4 390.7 135.8 379.0C132.2 367.3 129.5 354.5 127.0 344.0C124.5 333.5 122.3 325.7 120.6 316.0C118.9 306.3 117.6 295.4 116.6 285.7C115.6 276.0 114.7 264.6 114.6 257.7C114.5 250.8 115.0 250.2 115.8 244.0C116.6 237.8 117.9 228.4 119.3 220.6C120.7 212.8 122.8 204.7 124.0 197.3C125.2 189.9 126.2 184.1 126.8 176.3C127.4 168.5 126.6 158.0 127.5 150.6C128.4 143.2 130.5 137.6 132.1 132.0C133.7 126.4 136.0 119.3 136.8 116.8A7.8 5 15 0 0 121.6 113.3C121.0 116.0 119.4 124.5 118.1 129.6C116.8 134.7 114.7 138.5 113.5 143.6C112.3 148.7 112.6 155.2 111.1 160.0C109.6 164.8 105.6 170.2 104.5 172.2C104.5 171.3 105.5 169.8 104.8 167.0C104.1 164.2 101.8 160.4 100.6 155.3C99.4 150.2 97.6 143.2 97.8 136.6C98.0 130.0 99.8 123.8 101.8 115.6C103.8 107.4 107.9 97.3 110.0 87.6C112.1 77.9 113.4 68.4 114.2 57.3C115.0 46.2 114.9 27.2 115.1 21.2A10.2 7 0 0 0 94.8 21.2Z" fill="none" stroke="#dcdcdc" stroke-width="11" filter="url(#ab2)"/><path d="M94.8 21.2C94.6 27.2 94.8 45.5 93.6 57.3C92.4 69.1 90.1 81.4 87.8 92.3C85.5 103.2 81.5 113.3 79.6 122.6C77.6 131.9 77.9 141.7 76.1 148.3C74.2 154.9 70.0 157.2 68.5 162.3C67.0 167.4 66.5 172.8 66.8 178.6C67.1 184.4 68.3 190.3 70.3 197.3C72.2 204.3 76.0 212.8 78.5 220.6C81.0 228.4 84.0 237.8 85.5 244.0C87.0 250.2 87.0 250.8 87.8 257.7C88.6 264.6 88.7 275.2 90.1 285.7C91.5 296.2 93.8 310.1 96.0 320.6C98.2 331.1 100.1 337.1 103.0 348.6C105.9 360.1 111.8 382.7 113.5 389.5C110.2 387.6 96.9 379.8 93.6 377.8C91.7 376.6 83.9 372.0 82.0 370.8C79.7 370.1 74.2 368.2 68.0 366.8C61.8 365.4 52.4 363.4 44.6 362.6C36.8 361.8 25.2 362.1 21.3 362.0A7 10.6 0 0 0 20.0 383.0C21.4 383.0 22.2 382.9 28.3 383.0C34.4 383.1 47.8 382.3 56.3 383.6C64.8 384.9 72.6 387.7 79.6 390.6C86.6 393.5 93.2 397.5 98.3 401.0C103.4 404.5 105.7 406.7 110.0 411.6C114.3 416.5 119.5 423.5 124.0 430.3C128.5 437.1 134.7 448.7 136.8 452.4A12.8 8.9 -28 0 0 160.0 439.6C158.1 435.3 152.3 424.1 148.3 414.0C144.3 403.9 139.4 390.7 135.8 379.0C132.2 367.3 129.5 354.5 127.0 344.0C124.5 333.5 122.3 325.7 120.6 316.0C118.9 306.3 117.6 295.4 116.6 285.7C115.6 276.0 114.7 264.6 114.6 257.7C114.5 250.8 115.0 250.2 115.8 244.0C116.6 237.8 117.9 228.4 119.3 220.6C120.7 212.8 122.8 204.7 124.0 197.3C125.2 189.9 126.2 184.1 126.8 176.3C127.4 168.5 126.6 158.0 127.5 150.6C128.4 143.2 130.5 137.6 132.1 132.0C133.7 126.4 136.0 119.3 136.8 116.8A7.8 5 15 0 0 121.6 113.3C121.0 116.0 119.4 124.5 118.1 129.6C116.8 134.7 114.7 138.5 113.5 143.6C112.3 148.7 112.6 155.2 111.1 160.0C109.6 164.8 105.6 170.2 104.5 172.2C104.5 171.3 105.5 169.8 104.8 167.0C104.1 164.2 101.8 160.4 100.6 155.3C99.4 150.2 97.6 143.2 97.8 136.6C98.0 130.0 99.8 123.8 101.8 115.6C103.8 107.4 107.9 97.3 110.0 87.6C112.1 77.9 113.4 68.4 114.2 57.3C115.0 46.2 114.9 27.2 115.1 21.2A10.2 7 0 0 0 94.8 21.2Z" fill="none" stroke="#707070" stroke-width="2" filter="url(#ab1)"/></g>
<path d="M94.8 21.2C94.6 27.2 94.8 45.5 93.6 57.3C92.4 69.1 90.1 81.4 87.8 92.3C85.5 103.2 81.5 113.3 79.6 122.6C77.6 131.9 77.9 141.7 76.1 148.3C74.2 154.9 70.0 157.2 68.5 162.3C67.0 167.4 66.5 172.8 66.8 178.6C67.1 184.4 68.3 190.3 70.3 197.3C72.2 204.3 76.0 212.8 78.5 220.6C81.0 228.4 84.0 237.8 85.5 244.0C87.0 250.2 87.0 250.8 87.8 257.7C88.6 264.6 88.7 275.2 90.1 285.7C91.5 296.2 93.8 310.1 96.0 320.6C98.2 331.1 100.1 337.1 103.0 348.6C105.9 360.1 111.8 382.7 113.5 389.5C110.2 387.6 96.9 379.8 93.6 377.8C91.7 376.6 83.9 372.0 82.0 370.8C79.7 370.1 74.2 368.2 68.0 366.8C61.8 365.4 52.4 363.4 44.6 362.6C36.8 361.8 25.2 362.1 21.3 362.0A7 10.6 0 0 0 20.0 383.0C21.4 383.0 22.2 382.9 28.3 383.0C34.4 383.1 47.8 382.3 56.3 383.6C64.8 384.9 72.6 387.7 79.6 390.6C86.6 393.5 93.2 397.5 98.3 401.0C103.4 404.5 105.7 406.7 110.0 411.6C114.3 416.5 119.5 423.5 124.0 430.3C128.5 437.1 134.7 448.7 136.8 452.4A12.8 8.9 -28 0 0 160.0 439.6C158.1 435.3 152.3 424.1 148.3 414.0C144.3 403.9 139.4 390.7 135.8 379.0C132.2 367.3 129.5 354.5 127.0 344.0C124.5 333.5 122.3 325.7 120.6 316.0C118.9 306.3 117.6 295.4 116.6 285.7C115.6 276.0 114.7 264.6 114.6 257.7C114.5 250.8 115.0 250.2 115.8 244.0C116.6 237.8 117.9 228.4 119.3 220.6C120.7 212.8 122.8 204.7 124.0 197.3C125.2 189.9 126.2 184.1 126.8 176.3C127.4 168.5 126.6 158.0 127.5 150.6C128.4 143.2 130.5 137.6 132.1 132.0C133.7 126.4 136.0 119.3 136.8 116.8A7.8 5 15 0 0 121.6 113.3C121.0 116.0 119.4 124.5 118.1 129.6C116.8 134.7 114.7 138.5 113.5 143.6C112.3 148.7 112.6 155.2 111.1 160.0C109.6 164.8 105.6 170.2 104.5 172.2C104.5 171.3 105.5 169.8 104.8 167.0C104.1 164.2 101.8 160.4 100.6 155.3C99.4 150.2 97.6 143.2 97.8 136.6C98.0 130.0 99.8 123.8 101.8 115.6C103.8 107.4 107.9 97.3 110.0 87.6C112.1 77.9 113.4 68.4 114.2 57.3C115.0 46.2 114.9 27.2 115.1 21.2A10.2 7 0 0 0 94.8 21.2Z" fill="none" stroke="#111" stroke-width=".9" stroke-linejoin="round"/><clipPath id="cpv1b"><path d="M60 338 L99.5 338 L102.2 348.6 L112.5 389.5 L60 400Z"/></clipPath><g clip-path="url(#cpv1b)"><path d="M181.6 151.8C180.0 161.3 175.6 192.5 171.8 209.0C168.0 225.5 163.9 237.8 159.0 250.6C154.1 263.4 148.4 275.2 142.6 285.7C136.8 296.2 131.2 303.4 124.0 313.6C116.8 323.8 106.8 337.1 99.5 346.8C92.2 356.5 83.2 367.8 80.0 372.0L92.0 380.0C94.2 377.5 98.4 374.9 105.3 365.0C112.2 355.1 125.5 332.7 133.3 320.6C141.1 308.5 146.0 303.9 152.0 292.6C158.0 281.3 164.1 264.6 169.5 253.0C174.9 241.4 180.1 239.9 184.6 223.0C189.1 206.1 194.7 163.7 196.7 151.8Z" fill="#b0b0b0" filter="url(#ab1)"/></g><path d="M105.8 365 L93.6 377.8 L113.5 389.5Z" fill="#fff" stroke="#111" stroke-width=".9" stroke-linejoin="round"/><path d="M99.5 346.8 L82 370.6" stroke="#111" stroke-width=".9"/><ellipse cx="104.9" cy="21.2" rx="10.2" ry="7" transform="rotate(0 104.9 21.2)" fill="url(#aop)" stroke="#111" stroke-width=".9"/><ellipse cx="129.3" cy="114.8" rx="7.8" ry="5" transform="rotate(15 129.3 114.8)" fill="url(#aop)" stroke="#111" stroke-width=".9"/><ellipse cx="21" cy="372.5" rx="7" ry="10.6" transform="rotate(0 21 372.5)" fill="url(#aop)" stroke="#111" stroke-width=".9"/><ellipse cx="148.5" cy="445.5" rx="12.6" ry="8.9" transform="rotate(-28 148.5 445.5)" fill="url(#aop)" stroke="#111" stroke-width=".9"/><g transform="translate(186.5 172) rotate(-8)"><path d="M-13.6 -5 C-14.6 -9.5 -9.5 -10 -6.5 -8 C-2.5 -5.6 2.5 -5.6 6.5 -8 C9.5 -10 14.6 -9.5 13.6 -5 C12.8 -1.5 12.8 1.5 13.6 5 C14.6 9.5 9.5 10 6.5 8 C2.5 5.6 -2.5 5.6 -6.5 8 C-9.5 10 -14.6 9.5 -13.6 5 C-12.8 1.5 -12.8 -1.5 -13.6 -5Z" fill="url(#abone)" stroke="#2a2618" stroke-width=".9"/></g><g transform="translate(179.5 207.8) rotate(-5)"><path d="M-13.6 -5 C-14.6 -9.5 -9.5 -10 -6.5 -8 C-2.5 -5.6 2.5 -5.6 6.5 -8 C9.5 -10 14.6 -9.5 13.6 -5 C12.8 -1.5 12.8 1.5 13.6 5 C14.6 9.5 9.5 10 6.5 8 C2.5 5.6 -2.5 5.6 -6.5 8 C-9.5 10 -14.6 9.5 -13.6 5 C-12.8 1.5 -12.8 -1.5 -13.6 -5Z" fill="url(#abone)" stroke="#2a2618" stroke-width=".9"/></g><g transform="translate(167.8 241.6) rotate(-8)"><path d="M-13.6 -5 C-14.6 -9.5 -9.5 -10 -6.5 -8 C-2.5 -5.6 2.5 -5.6 6.5 -8 C9.5 -10 14.6 -9.5 13.6 -5 C12.8 -1.5 12.8 1.5 13.6 5 C14.6 9.5 9.5 10 6.5 8 C2.5 5.6 -2.5 5.6 -6.5 8 C-9.5 10 -14.6 9.5 -13.6 5 C-12.8 1.5 -12.8 -1.5 -13.6 -5Z" fill="url(#abone)" stroke="#2a2618" stroke-width=".9"/></g><g fill="none" stroke="#333" stroke-width=".7" stroke-dasharray="1 2.2"><path d="M68 172 H104 L126 177.6"/><path d="M89 257.7 H115"/><path d="M98.5 402 Q108 392 124 384 H138"/></g><text transform="translate(128.8 340.2) rotate(72.5)" font-family="Liberation Sans, sans-serif" font-size="7.2" fill="#222" textLength="91" lengthAdjust="spacingAndGlyphs">© 2011 IntimaMedia.com</text></g></svg><!--/A1--><div class="vsb"><i class="sbb" style="top:0"><b class="ar up"></b></i><i class="sbb" style="bottom:0"><b class="ar dn"></b></i></div><div class="hsb"><i class="sbb" style="left:0"><b class="ar lf"></b></i><i class="sbb" style="right:0"><b class="ar rt"></b></i></div></div>
 <div class="box" id="art2" style="left:1357px;top:239px;width:227px;height:484px;overflow:hidden"><!--A2--><svg width="224" height="482" viewBox="0 0 224 482" style="position:absolute;left:0;top:0"><g transform="translate(-.6 -1)"><g><clipPath id="cpv2"><path d="M10.3 151.8C12.3 163.7 17.9 206.3 22.4 223.0C26.9 239.7 32.5 241.4 37.3 251.8C42.1 262.2 45.8 275.0 51.2 285.7C56.6 296.4 64.7 307.9 69.9 316.0C75.2 324.1 77.5 327.0 82.7 334.6C88.0 342.2 94.5 351.9 101.4 361.5C108.3 371.1 120.2 386.9 124.0 392.0L137.0 385.5C131.7 379.2 113.4 359.3 104.9 347.5C96.4 335.7 92.8 325.9 86.2 314.8C79.6 303.7 70.6 291.5 65.2 281.0C59.8 270.5 58.6 263.8 53.6 251.8C48.6 239.8 39.9 225.7 35.2 209.0C30.5 192.3 27.0 161.3 25.4 151.8Z"/></clipPath>
<g clip-path="url(#cpv2)"><path d="M10.3 151.8C12.3 163.7 17.9 206.3 22.4 223.0C26.9 239.7 32.5 241.4 37.3 251.8C42.1 262.2 45.8 275.0 51.2 285.7C56.6 296.4 64.7 307.9 69.9 316.0C75.2 324.1 77.5 327.0 82.7 334.6C88.0 342.2 94.5 351.9 101.4 361.5C108.3 371.1 120.2 386.9 124.0 392.0L137.0 385.5C131.7 379.2 113.4 359.3 104.9 347.5C96.4 335.7 92.8 325.9 86.2 314.8C79.6 303.7 70.6 291.5 65.2 281.0C59.8 270.5 58.6 263.8 53.6 251.8C48.6 239.8 39.9 225.7 35.2 209.0C30.5 192.3 27.0 161.3 25.4 151.8Z" fill="#a0a0a0"/><path d="M10.3 151.8C12.3 163.7 17.9 206.3 22.4 223.0C26.9 239.7 32.5 241.4 37.3 251.8C42.1 262.2 45.8 275.0 51.2 285.7C56.6 296.4 64.7 307.9 69.9 316.0C75.2 324.1 77.5 327.0 82.7 334.6C88.0 342.2 94.5 351.9 101.4 361.5C108.3 371.1 120.2 386.9 124.0 392.0L137.0 385.5C131.7 379.2 113.4 359.3 104.9 347.5C96.4 335.7 92.8 325.9 86.2 314.8C79.6 303.7 70.6 291.5 65.2 281.0C59.8 270.5 58.6 263.8 53.6 251.8C48.6 239.8 39.9 225.7 35.2 209.0C30.5 192.3 27.0 161.3 25.4 151.8Z" fill="none" stroke="#dcdcdc" stroke-width="11" filter="url(#ab2)"/><path d="M10.3 151.8C12.3 163.7 17.9 206.3 22.4 223.0C26.9 239.7 32.5 241.4 37.3 251.8C42.1 262.2 45.8 275.0 51.2 285.7C56.6 296.4 64.7 307.9 69.9 316.0C75.2 324.1 77.5 327.0 82.7 334.6C88.0 342.2 94.5 351.9 101.4 361.5C108.3 371.1 120.2 386.9 124.0 392.0L137.0 385.5C131.7 379.2 113.4 359.3 104.9 347.5C96.4 335.7 92.8 325.9 86.2 314.8C79.6 303.7 70.6 291.5 65.2 281.0C59.8 270.5 58.6 263.8 53.6 251.8C48.6 239.8 39.9 225.7 35.2 209.0C30.5 192.3 27.0 161.3 25.4 151.8Z" fill="none" stroke="#707070" stroke-width="2" filter="url(#ab1)"/></g>
<path d="M10.3 151.8C12.3 163.7 17.9 206.3 22.4 223.0C26.9 239.7 32.5 241.4 37.3 251.8C42.1 262.2 45.8 275.0 51.2 285.7C56.6 296.4 64.7 307.9 69.9 316.0C75.2 324.1 77.5 327.0 82.7 334.6C88.0 342.2 94.5 351.9 101.4 361.5C108.3 371.1 120.2 386.9 124.0 392.0L137.0 385.5C131.7 379.2 113.4 359.3 104.9 347.5C96.4 335.7 92.8 325.9 86.2 314.8C79.6 303.7 70.6 291.5 65.2 281.0C59.8 270.5 58.6 263.8 53.6 251.8C48.6 239.8 39.9 225.7 35.2 209.0C30.5 192.3 27.0 161.3 25.4 151.8Z" fill="none" stroke="#111" stroke-width=".9" stroke-linejoin="round"/><ellipse cx="17.80000000000001" cy="151" rx="7.6" ry="4.7" transform="rotate(0 17.80000000000001 151)" fill="url(#aop)" stroke="#111" stroke-width=".9"/></g><g transform="translate(207 0) scale(-1 1)"><path d="M118.2 126 C115.5 120 113.6 114 113.8 107" fill="none" stroke="#111" stroke-width="4.6" stroke-linecap="butt"/><path d="M118.2 126 C115.5 120 113.6 114 113.8 107" fill="none" stroke="#b8b8b8" stroke-width="2.8999999999999995"/><path d="M127.6 154 C130 148 134 145.5 140 144.2" fill="none" stroke="#111" stroke-width="5.2" stroke-linecap="butt"/><path d="M127.6 154 C130 148 134 145.5 140 144.2" fill="none" stroke="#b8b8b8" stroke-width="3.5"/><ellipse cx="113.8" cy="106.8" rx="2.3" ry="1.3" fill="#555" stroke="#111" stroke-width=".7"/><ellipse cx="140.3" cy="144.2" rx="1.4" ry="2.5" fill="#555" stroke="#111" stroke-width=".7" transform="rotate(10 140.3 144.2)"/></g><clipPath id="cps2"><path d="M63.6 453.6C65.8 450.1 71.6 440.0 76.9 432.6C82.2 425.2 88.0 416.4 95.6 409.3C103.2 402.2 115.8 394.3 122.4 390.0C129.0 385.7 128.8 385.8 135.2 383.6C141.6 381.4 152.7 378.2 160.9 376.6C169.1 375.1 178.4 374.6 184.2 374.3C190.0 374.0 193.9 374.7 195.9 374.8A7 10.6 0 0 1 195.9 395.8C190.8 395.9 175.2 394.8 165.5 396.5C155.8 398.2 146.2 401.3 137.6 405.8C129.0 410.3 121.2 416.9 114.2 423.3C107.2 429.7 101.1 437.1 95.6 444.3C90.0 451.5 83.4 462.7 80.9 466.4A9.8 7 28 0 1 63.6 453.6Z"/></clipPath>
<g clip-path="url(#cps2)"><path d="M63.6 453.6C65.8 450.1 71.6 440.0 76.9 432.6C82.2 425.2 88.0 416.4 95.6 409.3C103.2 402.2 115.8 394.3 122.4 390.0C129.0 385.7 128.8 385.8 135.2 383.6C141.6 381.4 152.7 378.2 160.9 376.6C169.1 375.1 178.4 374.6 184.2 374.3C190.0 374.0 193.9 374.7 195.9 374.8A7 10.6 0 0 1 195.9 395.8C190.8 395.9 175.2 394.8 165.5 396.5C155.8 398.2 146.2 401.3 137.6 405.8C129.0 410.3 121.2 416.9 114.2 423.3C107.2 429.7 101.1 437.1 95.6 444.3C90.0 451.5 83.4 462.7 80.9 466.4A9.8 7 28 0 1 63.6 453.6Z" fill="#a0a0a0"/><path d="M63.6 453.6C65.8 450.1 71.6 440.0 76.9 432.6C82.2 425.2 88.0 416.4 95.6 409.3C103.2 402.2 115.8 394.3 122.4 390.0C129.0 385.7 128.8 385.8 135.2 383.6C141.6 381.4 152.7 378.2 160.9 376.6C169.1 375.1 178.4 374.6 184.2 374.3C190.0 374.0 193.9 374.7 195.9 374.8A7 10.6 0 0 1 195.9 395.8C190.8 395.9 175.2 394.8 165.5 396.5C155.8 398.2 146.2 401.3 137.6 405.8C129.0 410.3 121.2 416.9 114.2 423.3C107.2 429.7 101.1 437.1 95.6 444.3C90.0 451.5 83.4 462.7 80.9 466.4A9.8 7 28 0 1 63.6 453.6Z" fill="none" stroke="#dcdcdc" stroke-width="11" filter="url(#ab2)"/><path d="M63.6 453.6C65.8 450.1 71.6 440.0 76.9 432.6C82.2 425.2 88.0 416.4 95.6 409.3C103.2 402.2 115.8 394.3 122.4 390.0C129.0 385.7 128.8 385.8 135.2 383.6C141.6 381.4 152.7 378.2 160.9 376.6C169.1 375.1 178.4 374.6 184.2 374.3C190.0 374.0 193.9 374.7 195.9 374.8A7 10.6 0 0 1 195.9 395.8C190.8 395.9 175.2 394.8 165.5 396.5C155.8 398.2 146.2 401.3 137.6 405.8C129.0 410.3 121.2 416.9 114.2 423.3C107.2 429.7 101.1 437.1 95.6 444.3C90.0 451.5 83.4 462.7 80.9 466.4A9.8 7 28 0 1 63.6 453.6Z" fill="none" stroke="#707070" stroke-width="2" filter="url(#ab1)"/></g>
<path d="M63.6 453.6C65.8 450.1 71.6 440.0 76.9 432.6C82.2 425.2 88.0 416.4 95.6 409.3C103.2 402.2 115.8 394.3 122.4 390.0C129.0 385.7 128.8 385.8 135.2 383.6C141.6 381.4 152.7 378.2 160.9 376.6C169.1 375.1 178.4 374.6 184.2 374.3C190.0 374.0 193.9 374.7 195.9 374.8A7 10.6 0 0 1 195.9 395.8C190.8 395.9 175.2 394.8 165.5 396.5C155.8 398.2 146.2 401.3 137.6 405.8C129.0 410.3 121.2 416.9 114.2 423.3C107.2 429.7 101.1 437.1 95.6 444.3C90.0 451.5 83.4 462.7 80.9 466.4A9.8 7 28 0 1 63.6 453.6Z" fill="none" stroke="#111" stroke-width=".9" stroke-linejoin="round"/><clipPath id="cpv2b"><path d="M108 335 L150 335 L150 400 L88 400 L89.6 393 L101.2 360.3Z"/></clipPath><g clip-path="url(#cpv2b)"><path d="M10.3 151.8C12.3 163.7 17.9 206.3 22.4 223.0C26.9 239.7 32.5 241.4 37.3 251.8C42.1 262.2 45.8 275.0 51.2 285.7C56.6 296.4 64.7 307.9 69.9 316.0C75.2 324.1 77.5 327.0 82.7 334.6C88.0 342.2 94.5 351.9 101.4 361.5C108.3 371.1 120.2 386.9 124.0 392.0L137.0 385.5C131.7 379.2 113.4 359.3 104.9 347.5C96.4 335.7 92.8 325.9 86.2 314.8C79.6 303.7 70.6 291.5 65.2 281.0C59.8 270.5 58.6 263.8 53.6 251.8C48.6 239.8 39.9 225.7 35.2 209.0C30.5 192.3 27.0 161.3 25.4 151.8Z" fill="#b0b0b0" filter="url(#ab1)"/></g><path d="M104.9 347.5 L135.2 383.6 M101.4 361.5 L122.4 390" stroke="#111" stroke-width=".9"/><clipPath id="cpt2"><path d="M112.2 21.2C112.4 27.2 112.2 45.5 113.4 57.3C114.6 69.1 116.9 81.4 119.2 92.3C121.5 103.2 125.5 113.3 127.4 122.6C129.3 131.9 129.1 141.7 130.9 148.3C132.8 154.9 136.9 157.2 138.5 162.3C140.1 167.4 140.5 172.8 140.2 178.6C139.9 184.4 138.6 190.3 136.7 197.3C134.8 204.3 131.0 212.8 128.5 220.6C126.0 228.4 123.1 237.1 121.5 244.0C119.9 250.9 119.7 255.4 118.9 262.3C118.1 269.2 118.1 274.8 116.6 285.7C115.0 296.6 112.3 315.2 109.6 327.6C106.9 340.0 103.7 349.4 100.2 360.3C96.7 371.2 92.9 382.5 88.6 393.0C84.3 403.5 79.1 413.8 74.6 423.3C70.1 432.8 63.9 445.6 61.7 450.0A9.8 7 28 0 1 44.3 440.0C46.2 436.1 51.2 426.5 55.9 416.3C60.5 406.1 67.5 392.2 72.2 379.0C76.9 365.8 80.8 350.6 83.9 337.0C87.0 323.4 89.4 309.8 90.9 297.3C92.5 284.9 93.2 271.2 93.2 262.3C93.2 253.4 92.1 250.9 91.2 244.0C90.3 237.1 89.1 228.4 87.7 220.6C86.3 212.8 84.2 204.7 83.0 197.3C81.8 189.9 80.8 184.1 80.2 176.3C79.6 168.5 80.4 158.0 79.5 150.6C78.6 143.2 76.5 137.6 74.9 132.0C73.4 126.4 71.0 119.3 70.2 116.8A7.8 5 -15 0 1 85.4 113.3C86.0 116.0 87.6 124.5 88.9 129.6C90.2 134.7 92.3 138.5 93.5 143.6C94.7 148.7 94.4 155.2 95.9 160.0C97.4 164.8 101.4 170.2 102.5 172.2C102.5 171.3 101.5 169.8 102.2 167.0C102.9 164.2 105.2 160.4 106.4 155.3C107.6 150.2 109.4 143.2 109.2 136.6C109.0 130.0 107.2 123.8 105.2 115.6C103.2 107.4 99.1 97.3 97.0 87.6C94.9 77.9 93.6 68.4 92.8 57.3C92.0 46.2 92.1 27.2 91.9 21.2A10.2 7 0 0 1 112.2 21.2Z"/></clipPath>
<g clip-path="url(#cpt2)"><path d="M112.2 21.2C112.4 27.2 112.2 45.5 113.4 57.3C114.6 69.1 116.9 81.4 119.2 92.3C121.5 103.2 125.5 113.3 127.4 122.6C129.3 131.9 129.1 141.7 130.9 148.3C132.8 154.9 136.9 157.2 138.5 162.3C140.1 167.4 140.5 172.8 140.2 178.6C139.9 184.4 138.6 190.3 136.7 197.3C134.8 204.3 131.0 212.8 128.5 220.6C126.0 228.4 123.1 237.1 121.5 244.0C119.9 250.9 119.7 255.4 118.9 262.3C118.1 269.2 118.1 274.8 116.6 285.7C115.0 296.6 112.3 315.2 109.6 327.6C106.9 340.0 103.7 349.4 100.2 360.3C96.7 371.2 92.9 382.5 88.6 393.0C84.3 403.5 79.1 413.8 74.6 423.3C70.1 432.8 63.9 445.6 61.7 450.0A9.8 7 28 0 1 44.3 440.0C46.2 436.1 51.2 426.5 55.9 416.3C60.5 406.1 67.5 392.2 72.2 379.0C76.9 365.8 80.8 350.6 83.9 337.0C87.0 323.4 89.4 309.8 90.9 297.3C92.5 284.9 93.2 271.2 93.2 262.3C93.2 253.4 92.1 250.9 91.2 244.0C90.3 237.1 89.1 228.4 87.7 220.6C86.3 212.8 84.2 204.7 83.0 197.3C81.8 189.9 80.8 184.1 80.2 176.3C79.6 168.5 80.4 158.0 79.5 150.6C78.6 143.2 76.5 137.6 74.9 132.0C73.4 126.4 71.0 119.3 70.2 116.8A7.8 5 -15 0 1 85.4 113.3C86.0 116.0 87.6 124.5 88.9 129.6C90.2 134.7 92.3 138.5 93.5 143.6C94.7 148.7 94.4 155.2 95.9 160.0C97.4 164.8 101.4 170.2 102.5 172.2C102.5 171.3 101.5 169.8 102.2 167.0C102.9 164.2 105.2 160.4 106.4 155.3C107.6 150.2 109.4 143.2 109.2 136.6C109.0 130.0 107.2 123.8 105.2 115.6C103.2 107.4 99.1 97.3 97.0 87.6C94.9 77.9 93.6 68.4 92.8 57.3C92.0 46.2 92.1 27.2 91.9 21.2A10.2 7 0 0 1 112.2 21.2Z" fill="#a0a0a0"/><path d="M112.2 21.2C112.4 27.2 112.2 45.5 113.4 57.3C114.6 69.1 116.9 81.4 119.2 92.3C121.5 103.2 125.5 113.3 127.4 122.6C129.3 131.9 129.1 141.7 130.9 148.3C132.8 154.9 136.9 157.2 138.5 162.3C140.1 167.4 140.5 172.8 140.2 178.6C139.9 184.4 138.6 190.3 136.7 197.3C134.8 204.3 131.0 212.8 128.5 220.6C126.0 228.4 123.1 237.1 121.5 244.0C119.9 250.9 119.7 255.4 118.9 262.3C118.1 269.2 118.1 274.8 116.6 285.7C115.0 296.6 112.3 315.2 109.6 327.6C106.9 340.0 103.7 349.4 100.2 360.3C96.7 371.2 92.9 382.5 88.6 393.0C84.3 403.5 79.1 413.8 74.6 423.3C70.1 432.8 63.9 445.6 61.7 450.0A9.8 7 28 0 1 44.3 440.0C46.2 436.1 51.2 426.5 55.9 416.3C60.5 406.1 67.5 392.2 72.2 379.0C76.9 365.8 80.8 350.6 83.9 337.0C87.0 323.4 89.4 309.8 90.9 297.3C92.5 284.9 93.2 271.2 93.2 262.3C93.2 253.4 92.1 250.9 91.2 244.0C90.3 237.1 89.1 228.4 87.7 220.6C86.3 212.8 84.2 204.7 83.0 197.3C81.8 189.9 80.8 184.1 80.2 176.3C79.6 168.5 80.4 158.0 79.5 150.6C78.6 143.2 76.5 137.6 74.9 132.0C73.4 126.4 71.0 119.3 70.2 116.8A7.8 5 -15 0 1 85.4 113.3C86.0 116.0 87.6 124.5 88.9 129.6C90.2 134.7 92.3 138.5 93.5 143.6C94.7 148.7 94.4 155.2 95.9 160.0C97.4 164.8 101.4 170.2 102.5 172.2C102.5 171.3 101.5 169.8 102.2 167.0C102.9 164.2 105.2 160.4 106.4 155.3C107.6 150.2 109.4 143.2 109.2 136.6C109.0 130.0 107.2 123.8 105.2 115.6C103.2 107.4 99.1 97.3 97.0 87.6C94.9 77.9 93.6 68.4 92.8 57.3C92.0 46.2 92.1 27.2 91.9 21.2A10.2 7 0 0 1 112.2 21.2Z" fill="none" stroke="#dcdcdc" stroke-width="11" filter="url(#ab2)"/><path d="M112.2 21.2C112.4 27.2 112.2 45.5 113.4 57.3C114.6 69.1 116.9 81.4 119.2 92.3C121.5 103.2 125.5 113.3 127.4 122.6C129.3 131.9 129.1 141.7 130.9 148.3C132.8 154.9 136.9 157.2 138.5 162.3C140.1 167.4 140.5 172.8 140.2 178.6C139.9 184.4 138.6 190.3 136.7 197.3C134.8 204.3 131.0 212.8 128.5 220.6C126.0 228.4 123.1 237.1 121.5 244.0C119.9 250.9 119.7 255.4 118.9 262.3C118.1 269.2 118.1 274.8 116.6 285.7C115.0 296.6 112.3 315.2 109.6 327.6C106.9 340.0 103.7 349.4 100.2 360.3C96.7 371.2 92.9 382.5 88.6 393.0C84.3 403.5 79.1 413.8 74.6 423.3C70.1 432.8 63.9 445.6 61.7 450.0A9.8 7 28 0 1 44.3 440.0C46.2 436.1 51.2 426.5 55.9 416.3C60.5 406.1 67.5 392.2 72.2 379.0C76.9 365.8 80.8 350.6 83.9 337.0C87.0 323.4 89.4 309.8 90.9 297.3C92.5 284.9 93.2 271.2 93.2 262.3C93.2 253.4 92.1 250.9 91.2 244.0C90.3 237.1 89.1 228.4 87.7 220.6C86.3 212.8 84.2 204.7 83.0 197.3C81.8 189.9 80.8 184.1 80.2 176.3C79.6 168.5 80.4 158.0 79.5 150.6C78.6 143.2 76.5 137.6 74.9 132.0C73.4 126.4 71.0 119.3 70.2 116.8A7.8 5 -15 0 1 85.4 113.3C86.0 116.0 87.6 124.5 88.9 129.6C90.2 134.7 92.3 138.5 93.5 143.6C94.7 148.7 94.4 155.2 95.9 160.0C97.4 164.8 101.4 170.2 102.5 172.2C102.5 171.3 101.5 169.8 102.2 167.0C102.9 164.2 105.2 160.4 106.4 155.3C107.6 150.2 109.4 143.2 109.2 136.6C109.0 130.0 107.2 123.8 105.2 115.6C103.2 107.4 99.1 97.3 97.0 87.6C94.9 77.9 93.6 68.4 92.8 57.3C92.0 46.2 92.1 27.2 91.9 21.2A10.2 7 0 0 1 112.2 21.2Z" fill="none" stroke="#707070" stroke-width="2" filter="url(#ab1)"/></g>
<path d="M112.2 21.2C112.4 27.2 112.2 45.5 113.4 57.3C114.6 69.1 116.9 81.4 119.2 92.3C121.5 103.2 125.5 113.3 127.4 122.6C129.3 131.9 129.1 141.7 130.9 148.3C132.8 154.9 136.9 157.2 138.5 162.3C140.1 167.4 140.5 172.8 140.2 178.6C139.9 184.4 138.6 190.3 136.7 197.3C134.8 204.3 131.0 212.8 128.5 220.6C126.0 228.4 123.1 237.1 121.5 244.0C119.9 250.9 119.7 255.4 118.9 262.3C118.1 269.2 118.1 274.8 116.6 285.7C115.0 296.6 112.3 315.2 109.6 327.6C106.9 340.0 103.7 349.4 100.2 360.3C96.7 371.2 92.9 382.5 88.6 393.0C84.3 403.5 79.1 413.8 74.6 423.3C70.1 432.8 63.9 445.6 61.7 450.0A9.8 7 28 0 1 44.3 440.0C46.2 436.1 51.2 426.5 55.9 416.3C60.5 406.1 67.5 392.2 72.2 379.0C76.9 365.8 80.8 350.6 83.9 337.0C87.0 323.4 89.4 309.8 90.9 297.3C92.5 284.9 93.2 271.2 93.2 262.3C93.2 253.4 92.1 250.9 91.2 244.0C90.3 237.1 89.1 228.4 87.7 220.6C86.3 212.8 84.2 204.7 83.0 197.3C81.8 189.9 80.8 184.1 80.2 176.3C79.6 168.5 80.4 158.0 79.5 150.6C78.6 143.2 76.5 137.6 74.9 132.0C73.4 126.4 71.0 119.3 70.2 116.8A7.8 5 -15 0 1 85.4 113.3C86.0 116.0 87.6 124.5 88.9 129.6C90.2 134.7 92.3 138.5 93.5 143.6C94.7 148.7 94.4 155.2 95.9 160.0C97.4 164.8 101.4 170.2 102.5 172.2C102.5 171.3 101.5 169.8 102.2 167.0C102.9 164.2 105.2 160.4 106.4 155.3C107.6 150.2 109.4 143.2 109.2 136.6C109.0 130.0 107.2 123.8 105.2 115.6C103.2 107.4 99.1 97.3 97.0 87.6C94.9 77.9 93.6 68.4 92.8 57.3C92.0 46.2 92.1 27.2 91.9 21.2A10.2 7 0 0 1 112.2 21.2Z" fill="none" stroke="#111" stroke-width=".9" stroke-linejoin="round"/><ellipse cx="102.1" cy="21.2" rx="10.2" ry="7" transform="rotate(0 102.1 21.2)" fill="url(#aop)" stroke="#111" stroke-width=".9"/><ellipse cx="77.69999999999999" cy="114.8" rx="7.8" ry="5" transform="rotate(-15 77.69999999999999 114.8)" fill="url(#aop)" stroke="#111" stroke-width=".9"/><ellipse cx="195.6" cy="385.3" rx="7" ry="10.6" transform="rotate(0 195.6 385.3)" fill="url(#aop)" stroke="#111" stroke-width=".9"/><ellipse cx="52.6" cy="445.6" rx="9.8" ry="7" transform="rotate(28 52.6 445.6)" fill="url(#aop)" stroke="#111" stroke-width=".9"/><ellipse cx="72.2" cy="459.6" rx="9.8" ry="7" transform="rotate(28 72.2 459.6)" fill="url(#aop)" stroke="#111" stroke-width=".9"/><g transform="translate(20.5 172) rotate(8)"><path d="M-13.6 -5 C-14.6 -9.5 -9.5 -10 -6.5 -8 C-2.5 -5.6 2.5 -5.6 6.5 -8 C9.5 -10 14.6 -9.5 13.6 -5 C12.8 -1.5 12.8 1.5 13.6 5 C14.6 9.5 9.5 10 6.5 8 C2.5 5.6 -2.5 5.6 -6.5 8 C-9.5 10 -14.6 9.5 -13.6 5 C-12.8 1.5 -12.8 -1.5 -13.6 -5Z" fill="url(#abone)" stroke="#2a2618" stroke-width=".9"/></g><g transform="translate(27.5 207.8) rotate(5)"><path d="M-13.6 -5 C-14.6 -9.5 -9.5 -10 -6.5 -8 C-2.5 -5.6 2.5 -5.6 6.5 -8 C9.5 -10 14.6 -9.5 13.6 -5 C12.8 -1.5 12.8 1.5 13.6 5 C14.6 9.5 9.5 10 6.5 8 C2.5 5.6 -2.5 5.6 -6.5 8 C-9.5 10 -14.6 9.5 -13.6 5 C-12.8 1.5 -12.8 -1.5 -13.6 -5Z" fill="url(#abone)" stroke="#2a2618" stroke-width=".9"/></g><g transform="translate(39.19999999999999 241.6) rotate(8)"><path d="M-13.6 -5 C-14.6 -9.5 -9.5 -10 -6.5 -8 C-2.5 -5.6 2.5 -5.6 6.5 -8 C9.5 -10 14.6 -9.5 13.6 -5 C12.8 -1.5 12.8 1.5 13.6 5 C14.6 9.5 9.5 10 6.5 8 C2.5 5.6 -2.5 5.6 -6.5 8 C-9.5 10 -14.6 9.5 -13.6 5 C-12.8 1.5 -12.8 -1.5 -13.6 -5Z" fill="url(#abone)" stroke="#2a2618" stroke-width=".9"/></g><g fill="none" stroke="#333" stroke-width=".7" stroke-dasharray="1 2.2"><path d="M139 172 H103 L81 177.6"/><path d="M94 257.7 H119"/></g><text transform="translate(48 426.6) rotate(-71.2)" font-family="Liberation Sans, sans-serif" font-size="7.2" fill="#222" textLength="91" lengthAdjust="spacingAndGlyphs">© 2011 IntimaMedia.com</text></g></svg><!--/A2--><div class="vsb"><i class="sbb" style="top:0"><b class="ar up"></b></i><i class="sbb" style="bottom:0"><b class="ar dn"></b></i></div><div class="hsb"><i class="sbb" style="left:0"><b class="ar lf"></b></i><i class="sbb" style="right:0"><b class="ar rt"></b></i></div></div>
 <!-- sliders -->
 <div class="sl" style="left:1138px;width:215px"></div><div class="slh" style="left:1130px"></div>
 <div class="sl" style="left:1365px;width:215px"></div><div class="slh" style="left:1357px"></div>
 <!-- buttons -->
 <div class="btn" style="left:1154px"><svg class="abs" style="left:31px;top:6px" width="14" height="17" viewBox="0 0 14 17"><path d="M7 1.3 C9.2 1.3 10 3.6 8.9 5.6 C11.6 7.4 12.6 11 11.6 13.6 Q11.2 14.4 10.2 14.4 H3.8 Q2.8 14.4 2.4 13.6 C1.4 11 2.4 7.4 5.1 5.6 C4 3.6 4.8 1.3 7 1.3Z" fill="#f6f62c" stroke="#111" stroke-width="1.1"/></svg><span style="left:50px;letter-spacing:-.35px">Plaque</span></div>
 <div class="btn" style="left:1282px"><svg class="abs" style="left:24px;top:1px" width="22" height="26" viewBox="0 0 22 26"><defs><linearGradient id="og" x1="0" y1="0" x2="0" y2="1"><stop offset="0" stop-color="#f08a3c"/><stop offset="1" stop-color="#d9641c"/></linearGradient></defs><path d="M11 1.4 C14.4 1.4 15.8 5.2 13.8 8.6 C18.2 11.4 19.8 17.4 18.2 21.8 Q17.6 23.2 16 23.2 H6 Q4.4 23.2 3.8 21.8 C2.2 17.4 3.8 11.4 8.2 8.6 C6.2 5.2 7.6 1.4 11 1.4Z" fill="url(#og)" stroke="#111" stroke-width="1.1"/></svg><span style="left:50px;letter-spacing:-.3px">Sténose</span></div>
 <div class="btn" style="left:1410px"><svg class="abs" style="left:19px;top:3px" width="26" height="24" viewBox="0 0 26 24"><path d="M6 2.6 H19.6 L23.4 13.6 L13 21.6 L2.4 13.6Z" fill="#3c3c3c" stroke="#111" stroke-width="1.1" stroke-linejoin="round"/></svg><span style="left:46px;letter-spacing:-.4px">Occlusion</span></div>
 <div class="help o" style="left:1538px;top:797px">?</div>
</div>

<div id="stripe"></div>
<div id="vscroll"><i class="sbb2" style="top:0"><b class="ar up"></b></i><i class="sbb2" style="bottom:0"><b class="ar dn"></b></i></div>
<div id="wbb"></div><div id="wbl"></div><div id="wbr"></div>
<!-- notification bar -->
<div id="notif"><div class="or"></div><span>Internet Explorer a terminé la suppression de l'historique de navigation sélectionné.</span>
 <svg class="abs" style="left:938px;top:23px" width="10" height="10" viewBox="0 0 10 10"><path d="M1.5 1.5 L8.5 8.5 M8.5 1.5 L1.5 8.5" stroke="#7b7b7b" stroke-width="1.7"/></svg></div>
<div id="taskbar"><div class="top"></div>
 <div class="dk"></div><div style="position:absolute;left:0;top:-1px;width:1680px;height:41px">
 <!-- start orb -->
 <svg class="abs" style="left:6px;top:0" width="44" height="41" viewBox="0 0 44 41">
  <defs><radialGradient id="orb" cx=".5" cy=".75" r=".75"><stop offset="0" stop-color="#5fc0f0"/><stop offset=".45" stop-color="#2473b8"/><stop offset="1" stop-color="#123a70"/></radialGradient>
  <linearGradient id="orbg" x1="0" y1="0" x2="0" y2="1"><stop offset="0" stop-color="#fff" stop-opacity=".75"/><stop offset="1" stop-color="#fff" stop-opacity=".08"/></linearGradient></defs>
  <circle cx="21.5" cy="21" r="18.6" fill="url(#orb)" stroke="#8fb0c8" stroke-width="1.2"/>
  <path d="M5 16 A17.5 17.5 0 0 1 38 16 Q21.5 23 5 16Z" fill="url(#orbg)"/>
  <path d="M13.5 14.5 Q17.5 12.5 21 14.5 L19.8 20.2 Q16.5 18.6 12.3 20.3Z" fill="#f0562c"/>
  <path d="M22.6 14.8 Q26.5 16.6 30.6 14.6 L29.2 20.4 Q25.5 22.2 21.3 20.4Z" fill="#8dc63f"/>
  <path d="M12 21.8 Q16 20 19.5 21.8 L18.2 27.6 Q15 26 10.8 27.6Z" fill="#38a2e0"/>
  <path d="M21 22 Q25 24 29 22 L27.6 27.8 Q24 29.6 19.8 27.8Z" fill="#fdc515"/>
 </svg>
 <!-- IE button -->
 <div class="tbb"></div>
 <svg class="abs" style="left:71px;top:3px" width="38" height="38" viewBox="0 0 38 38">
  <defs><linearGradient id="ieb" x1="0" y1="0" x2="0" y2="1"><stop offset="0" stop-color="#7fd0f8"/><stop offset=".5" stop-color="#3aa0e6"/><stop offset="1" stop-color="#1f86d6"/></linearGradient></defs>
  <path d="M27.2 28.2 A10.6 10.6 0 1 1 31 19.6 H12.5" fill="none" stroke="url(#ieb)" stroke-width="5.8"/>
  <path d="M4.5 33 C-1.5 25 13 8 26 5.5 C33 4.2 35.5 7.5 33 12.5" fill="none" stroke="#f9c822" stroke-width="2.6"/>
  <path d="M4.5 33 C7 36 12 34.2 16 31.2" fill="none" stroke="#f9c822" stroke-width="2.4"/>
 </svg>
 <!-- chrome icon -->
 <svg class="abs" style="left:136px;top:6px" width="30" height="30" viewBox="0 0 30 30">
  <circle cx="15" cy="15" r="14" fill="#e33b2e"/>
  <path d="M15 15 L2.9 8 A14 14 0 0 0 9 27.6 Z" fill="#2e9e4b"/><path d="M15 15 L9 27.6 A14 14 0 0 0 28.9 13 L15 13Z" fill="#f9cc1f"/>
  <path d="M15 15 L2.9 8 A14 14 0 0 1 28.9 13 L15 13Z" fill="#e33b2e"/>
  <circle cx="15" cy="15" r="6.6" fill="#f4f4f4"/><circle cx="15" cy="15" r="5.2" fill="#4b8bd8"/>
 </svg>
 <!-- tray -->
 <span class="tx" style="left:1487px;top:12px;font-size:12px">FR</span>
 <svg class="abs" style="left:1515px;top:12px" width="70" height="20" viewBox="0 0 70 20">
  <path d="M2 13 L6.5 8 L11 13Z" fill="#f4f4f4"/>
  <path d="M24 8 H27 L31 3.5 V17 L27 13 H24Z" fill="#f0f0f0" stroke="#555" stroke-width=".5"/><circle cx="34" cy="13.5" r="4" fill="#fff" stroke="#e01818" stroke-width="1.8"/><path d="M31.4 11 L36.6 16" stroke="#e01818" stroke-width="1.8"/>
  <rect x="51.5" y="4.5" width="11" height="9" fill="#5b6532" stroke="#f0f0f0" stroke-width="1.4"/><path d="M53 17 H61 M57 13.5 V17" stroke="#f0f0f0" stroke-width="1.4"/><path d="M48.5 2 V6 M51 2 V6 M47.5 6 H52 V9 H47.5Z M49.7 9 V16" stroke="#f0f0f0" stroke-width="1.2" fill="none"/>
 </svg>
 <span class="tx" style="left:1595px;top:7px;width:60px;text-align:center;font-size:12px">16:34</span>
 <span class="tx" style="left:1590px;top:24px;width:70px;text-align:center;font-size:12px">11/10/2012</span>
 <div class="sd"></div>
</div></div>
</body>
</html>
